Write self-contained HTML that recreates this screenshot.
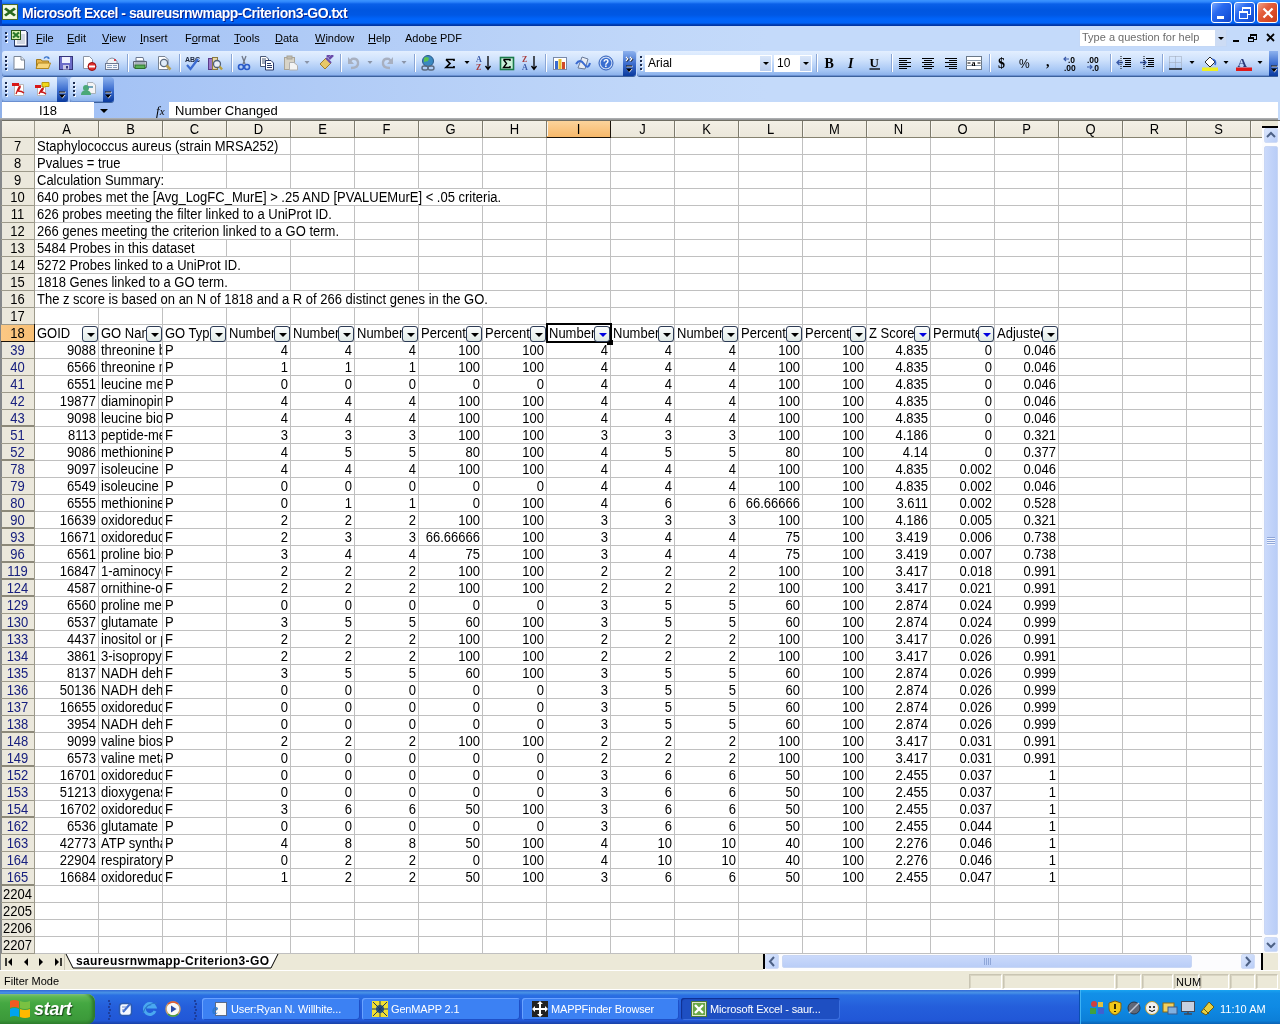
<!DOCTYPE html><html><head><meta charset="utf-8"><title>Excel</title><style>
*{box-sizing:border-box}
body{margin:0;width:1280px;height:1024px;position:relative;overflow:hidden;font-family:"Liberation Sans",sans-serif;background:#fff;color:#000}
.a{position:absolute}
.dock{background:linear-gradient(90deg,#9ebef5 0%,#b0cbf6 25%,#c0d7f9 50%,#c4dafa 60%,#c4dafa 100%)}
.tb{position:absolute;height:25px;border-radius:3px;background:linear-gradient(#e3efff 0%,#cfe2fc 35%,#a9c8f5 75%,#86aeea 100%);box-shadow:inset 0 -1px 0 #6a8fd0, 0 1px 0 #3b619c}
.grip{position:absolute;width:2px;height:2px;background:#1c2c50;box-shadow:1px 1px 0 #f4f8ff}
.sep{position:absolute;width:1px;height:18px;background:#8aa6d6;box-shadow:1px 0 0 #fff}
.chev{position:absolute;border-radius:0 3px 3px 0;background:linear-gradient(#8db2ee 0%,#3e6fd0 50%,#0a3a9e 100%)}
.mi{position:absolute;font-size:11px;top:31px;line-height:14px;color:#000}
.ch{position:absolute;top:121px;height:16px;font-size:13px;line-height:16px;text-align:center;background:linear-gradient(#f6f5ee,#e6e2d4)}
.rh{position:absolute;left:1px;width:33px;height:16px;font-size:13px;line-height:16px;text-align:center;background:linear-gradient(90deg,#f3f1e9,#e9e6da)}
.c{position:absolute;height:16px;font-size:13px;line-height:16px;white-space:nowrap;overflow:hidden;padding:0 2px;transform:scaleY(1.08);transform-origin:0 3px}
.t{transform:scaleY(1.08);transform-origin:0 3px}
.r{text-align:right}
.dd{position:absolute;z-index:1;width:16px;height:16px;border:1px solid #2c3a55;border-radius:3px;background:linear-gradient(#fbfdfd,#dfe9e6)}
.dd:after{content:"";position:absolute;left:4px;top:6px;border-left:4px solid transparent;border-right:4px solid transparent;border-top:4px solid #000}
.dd.b:after{border-top-color:#0000e0}
.tbtn{position:absolute;top:998px;height:22px;border-radius:3px;background:#3c81f3;box-shadow:inset 1px 1px 0 #6aa2ff, inset -1px -1px 0 #1e50c8;color:#fff;font-size:11px;line-height:22px;white-space:nowrap;overflow:hidden}
.sp{position:absolute;top:974px;height:15px;border:1px solid #c9c5b3;border-right-color:#fff;border-bottom-color:#fff;box-shadow:inset 1px 1px 0 #d8d4c2}
</style></head><body><div style="position:absolute;left:0;top:0;width:1280px;height:1024px;overflow:hidden;will-change:transform">
<div class="a" style="left:0;top:0;width:1280px;height:26px;background:linear-gradient(#3d95ff 0px,#2d85fb 2px,#0a60e8 4px,#0056e0 10px,#0058e4 15px,#0064fa 19px,#0062f6 23px,#0040b8 24.5px,#00309a 26px)"></div>
<div class="a" style="left:0;top:0;width:2px;height:26px;background:#0840c0"></div>
<div class="a" style="left:2px;top:4px;width:16px;height:16px"><svg width="16" height="16" viewBox="0 0 16 16" style="display:block"><rect x="0.5" y="0.5" width="15" height="15" fill="#e8f4c8" stroke="#4a6a2a"/><rect x="1.5" y="1.5" width="13" height="13" fill="#f4fae4"/><path d="M3 3.5L13 12.5M13 3.5L3 12.5" stroke="#2a6a1e" stroke-width="3" transform="translate(8 8) scale(1 0.8) translate(-8 -8)"/></svg></div>
<div class="a" style="left:22px;top:5px;font-size:14px;letter-spacing:-0.5px;font-weight:bold;line-height:16px;color:#fff;text-shadow:1px 1px 0 #0a1e8a;white-space:nowrap">Microsoft Excel - saureusrnwmapp-Criterion3-GO.txt</div>
<div class="a" style="left:1211px;top:2px;width:21px;height:21px;border:1px solid #fff;border-radius:3px;background:linear-gradient(135deg,#7aa9ff 0%,#2a6af0 35%,#1a58e0 70%,#1446c8 100%)">
<div class="a" style="left:5px;top:13px;width:7px;height:3px;background:#fff"></div>
</div>
<div class="a" style="left:1234px;top:2px;width:21px;height:21px;border:1px solid #fff;border-radius:3px;background:linear-gradient(135deg,#7aa9ff 0%,#2a6af0 35%,#1a58e0 70%,#1446c8 100%)">
<div class="a" style="left:7px;top:4px;width:9px;height:8px;border:1px solid #fff;border-top-width:2px"></div>
<div class="a" style="left:4px;top:8px;width:9px;height:8px;border:1px solid #fff;border-top-width:2px;background:#2a64e8"></div>
</div>
<div class="a" style="left:1257px;top:2px;width:21px;height:21px;border:1px solid #fff;border-radius:3px;background:linear-gradient(135deg,#f0a38a 0%,#e5603e 35%,#d84a26 70%,#c4401f 100%)">
<svg class="a" style="left:4px;top:4px" width="12" height="12"><path d="M1.5 1.5L10.5 10.5M10.5 1.5L1.5 10.5" stroke="#fff" stroke-width="2.2"/></svg>
</div>
<div class="a dock" style="left:0;top:26px;width:1280px;height:94px"></div>
<div class="a" style="left:0;top:26px;width:2px;height:94px;background:#8fb0e8"></div>
<div class="grip" style="left:5px;top:32px"></div>
<div class="grip" style="left:5px;top:36px"></div>
<div class="grip" style="left:5px;top:40px"></div>
<div class="a" style="left:10px;top:29px;width:18px;height:18px"><svg width="18" height="18" viewBox="0 0 18 18" style="display:block"><path d="M4.5 1.5H15.5L17.5 3.5V17.5H4.5Z" fill="#f8f8fc" stroke="#283c68"/><path d="M17.5 3V17.5H5" stroke="#1a2a58" stroke-width="2" fill="none"/><path d="M11 6H15M11 8H15M11 10H15M7 12H15M7 14H15" stroke="#a8b4c8"/><rect x="1.5" y="1.5" width="9" height="9" fill="#d8f0b0" stroke="#2a5a1a"/><path d="M3 3.5L9 8.5M9 3.5L3 8.5" stroke="#2a7a2a" stroke-width="2.2"/></svg></div>
<div class="mi" style="left:36px"><u>F</u>ile</div>
<div class="mi" style="left:67px"><u>E</u>dit</div>
<div class="mi" style="left:102px"><u>V</u>iew</div>
<div class="mi" style="left:140px"><u>I</u>nsert</div>
<div class="mi" style="left:185px">F<u>o</u>rmat</div>
<div class="mi" style="left:234px"><u>T</u>ools</div>
<div class="mi" style="left:275px"><u>D</u>ata</div>
<div class="mi" style="left:315px"><u>W</u>indow</div>
<div class="mi" style="left:368px"><u>H</u>elp</div>
<div class="mi" style="left:405px">Adob<u>e</u> PDF</div>
<div class="a" style="left:1079px;top:29px;width:148px;height:18px;background:#fff;border:1px solid #c4d8f6"></div>
<div class="a" style="left:1215px;top:30px;width:11px;height:16px;background:#cddcf4"></div>
<div class="a" style="left:1218px;top:37px;border-left:3px solid transparent;border-right:3px solid transparent;border-top:3px solid #000;width:0;height:0"></div>
<div class="a" style="left:1082px;top:29px;font-size:11px;line-height:16px;color:#6d6d6d">Type a question for help</div>
<div class="a" style="left:1233px;top:40px;width:6px;height:2px;background:#000"></div>
<div class="a" style="left:1250px;top:34px;width:7px;height:6px;border:1px solid #000;border-top-width:2px"></div>
<div class="a" style="left:1248px;top:37px;width:6px;height:5px;border:1px solid #000;border-top-width:2px;background:#c4daf9"></div>
<svg class="a" style="left:1266px;top:33px" width="9" height="9"><path d="M1 1L8 8M8 1L1 8" stroke="#000" stroke-width="1.8"/></svg>
<div class="tb" style="left:2px;top:51px;width:634px"></div>
<div class="grip" style="left:5px;top:56px"></div>
<div class="grip" style="left:5px;top:60px"></div>
<div class="grip" style="left:5px;top:64px"></div>
<div class="grip" style="left:5px;top:68px"></div>
<div class="sep" style="left:127px;top:54px"></div>
<div class="sep" style="left:179px;top:54px"></div>
<div class="sep" style="left:231px;top:54px"></div>
<div class="sep" style="left:340px;top:54px"></div>
<div class="sep" style="left:414px;top:54px"></div>
<div class="sep" style="left:545px;top:54px"></div>
<div class="a" style="left:11px;top:55px;width:16px;height:16px"><svg width="16" height="16" viewBox="0 0 16 16" style="display:block"><path d="M3 1.5H10L13.5 5V14.5H3Z" fill="#fff" stroke="#7a8595"/><path d="M10 1.5V5H13.5" fill="#e6ebf3" stroke="#7a8595"/><path d="M4 13.5H13" stroke="#c6cdd8"/></svg></div>
<div class="a" style="left:35px;top:55px;width:16px;height:16px"><svg width="16" height="16" viewBox="0 0 16 16" style="display:block"><path d="M1.5 4.5H6L7 6H13.5V13.5H1.5Z" fill="#e8b448" stroke="#a07a1c"/><path d="M3 8H15.5L13.5 13.5H1Z" fill="#f7d57a" stroke="#b08620"/><path d="M9 3.5Q11 0.5 14 3" stroke="#3a74c8" stroke-width="1.3" fill="none"/><path d="M13 1.5L15 3.5L12.5 4Z" fill="#3a74c8"/></svg></div>
<div class="a" style="left:58px;top:55px;width:16px;height:16px"><svg width="16" height="16" viewBox="0 0 16 16" style="display:block"><rect x="1.5" y="1.5" width="13" height="13" fill="#6c6cc8" stroke="#34347a"/><rect x="4" y="2" width="8" height="6" fill="#eef0ff"/><rect x="5" y="10" width="6" height="4.5" fill="#c9c9e8"/><rect x="8" y="11" width="2" height="2.5" fill="#34347a"/></svg></div>
<div class="a" style="left:81px;top:55px;width:16px;height:16px"><svg width="16" height="16" viewBox="0 0 16 16" style="display:block"><path d="M2.5 1.5H8.5L11.5 4.5V13.5H2.5Z" fill="#fff" stroke="#8a94a4"/><circle cx="11" cy="11.5" r="4" fill="#e03030" stroke="#9a1010"/><rect x="8" y="10.5" width="6" height="2" fill="#fff"/></svg></div>
<div class="a" style="left:104px;top:55px;width:16px;height:16px"><svg width="16" height="16" viewBox="0 0 16 16" style="display:block"><path d="M3 6Q8 0 13 6V10H3Z" fill="#f0f2f6" stroke="#8a94a4"/><rect x="1.5" y="8.5" width="13" height="6" fill="#f4f6fa" stroke="#6c7890"/><path d="M3 10.5H8M3 12.5H8M9 10.5H13M9 12.5H13" stroke="#8aa0c0"/><rect x="10" y="4" width="2" height="2" fill="#d04050"/></svg></div>
<div class="a" style="left:132px;top:55px;width:16px;height:16px"><svg width="16" height="16" viewBox="0 0 16 16" style="display:block"><path d="M4 2.5H11L12 6H4Z" fill="#fff" stroke="#6c7890"/><path d="M1.5 6.5H14.5V12.5H1.5Z" fill="#c6ccd6" stroke="#5c6678"/><rect x="3" y="10" width="10" height="3.5" fill="#58b058" stroke="#2c6e2c"/><path d="M3 8H13" stroke="#8c96a8"/></svg></div>
<div class="a" style="left:156px;top:55px;width:16px;height:16px"><svg width="16" height="16" viewBox="0 0 16 16" style="display:block"><path d="M2.5 1.5H9L12 4.5V14.5H2.5Z" fill="#fff" stroke="#7a8595"/><circle cx="8" cy="8" r="3.6" fill="#e0ecf8" stroke="#5a6a80" stroke-width="1.3"/><path d="M10.5 10.5L14.5 14.5" stroke="#b8a050" stroke-width="2.5"/></svg></div>
<div class="a" style="left:184px;top:55px;width:16px;height:16px"><svg width="16" height="16" viewBox="0 0 16 16" style="display:block"><text x="1" y="7" font-family="Liberation Sans" font-size="7" font-weight="bold" fill="#202a40">ABC</text><path d="M3 10L6.5 14L14 4" stroke="#3a6ad0" stroke-width="2.2" fill="none"/></svg></div>
<div class="a" style="left:207px;top:55px;width:16px;height:16px"><svg width="16" height="16" viewBox="0 0 16 16" style="display:block"><rect x="1.5" y="3.5" width="4" height="11" fill="#9a7ac8" stroke="#5a3a8a"/><rect x="5.5" y="2.5" width="5" height="12" fill="#e8d8a8" stroke="#8a7a40"/><circle cx="10" cy="9" r="3.5" fill="#e8eef8" stroke="#50607a" stroke-width="1.3"/><path d="M12.5 11.5L15 14.5" stroke="#b8a040" stroke-width="2.4"/></svg></div>
<div class="a" style="left:236px;top:55px;width:16px;height:16px"><svg width="16" height="16" viewBox="0 0 16 16" style="display:block"><path d="M6 1L9 9M10 1L7 9" stroke="#707888" stroke-width="1.3"/><circle cx="5" cy="12" r="2.5" fill="none" stroke="#2a5ac8" stroke-width="1.6"/><circle cx="11" cy="12" r="2.5" fill="none" stroke="#2a5ac8" stroke-width="1.6"/></svg></div>
<div class="a" style="left:259px;top:55px;width:16px;height:16px"><svg width="16" height="16" viewBox="0 0 16 16" style="display:block"><path d="M1.5 1.5H7L9.5 4V11.5H1.5Z" fill="#fff" stroke="#4a5a78"/><path d="M3 4H7M3 6H8M3 8H8" stroke="#4a5a78"/><path d="M6.5 5.5H12L14.5 8V15H6.5Z" fill="#fff" stroke="#2a3a68"/><path d="M8 8.5H12M8 10.5H13M8 12.5H13" stroke="#2a3a68"/></svg></div>
<div class="a" style="left:283px;top:55px;width:16px;height:16px"><svg width="16" height="16" viewBox="0 0 16 16" style="display:block"><rect x="1.5" y="2.5" width="10" height="12" fill="#d8d4c8" stroke="#a8a498"/><rect x="4" y="1" width="5" height="3" fill="#c0bcb0" stroke="#a8a498"/><path d="M6.5 7.5H11L14.5 10.5V15H6.5Z" fill="#f4f4f4" stroke="#b0b0b0"/></svg></div>
<div class="a" style="left:304px;top:55px;width:16px;height:16px"><svg width="6" height="16" viewBox="0 0 6 16" style="display:block"><path d="M0.5 6H5.5L3 9Z" fill="#8a94a8"/></svg></div>
<div class="a" style="left:318px;top:55px;width:16px;height:16px"><svg width="16" height="16" viewBox="0 0 16 16" style="display:block"><path d="M2 9L8 3L13 8L7 14Z" fill="#e8c868" stroke="#a08030"/><path d="M9 2L13 -2M11 4L15 0" stroke="#6a4aa8" stroke-width="2.5"/><path d="M8 3L13 8" stroke="#6a4aa8" stroke-width="2"/></svg></div>
<div class="a" style="left:346px;top:55px;width:16px;height:16px"><svg width="16" height="16" viewBox="0 0 16 16" style="display:block"><path d="M5 13Q13 13 12 7Q11 3 6 4L4 6" stroke="#a8b0c0" stroke-width="2.4" fill="none"/><path d="M2 2V9H8Z" fill="#a8b0c0"/></svg></div>
<div class="a" style="left:367px;top:55px;width:16px;height:16px"><svg width="6" height="16" viewBox="0 0 6 16" style="display:block"><path d="M0.5 6H5.5L3 9Z" fill="#8a94a8"/></svg></div>
<div class="a" style="left:379px;top:55px;width:16px;height:16px"><svg width="16" height="16" viewBox="0 0 16 16" style="display:block"><path d="M11 13Q3 13 4 7Q5 3 10 4L12 6" stroke="#a8b0c0" stroke-width="2.4" fill="none"/><path d="M14 2V9H8Z" fill="#a8b0c0"/></svg></div>
<div class="a" style="left:401px;top:55px;width:16px;height:16px"><svg width="6" height="16" viewBox="0 0 6 16" style="display:block"><path d="M0.5 6H5.5L3 9Z" fill="#8a94a8"/></svg></div>
<div class="a" style="left:420px;top:55px;width:16px;height:16px"><svg width="16" height="16" viewBox="0 0 16 16" style="display:block"><circle cx="8" cy="6" r="5.5" fill="#3a88c0" stroke="#2a5a8a"/><path d="M4 3Q6 1 9 3L8 6L4 7Z" fill="#5ac050"/><rect x="2" y="11" width="6" height="4" rx="2" fill="none" stroke="#5a6a80" stroke-width="1.4"/><rect x="8" y="11" width="6" height="4" rx="2" fill="none" stroke="#5a6a80" stroke-width="1.4"/></svg></div>
<div class="a" style="left:442px;top:55px;width:16px;height:16px"><svg width="16" height="16" viewBox="0 0 16 16" style="display:block"><path d="M4 4.5H12V6M12 11V12.5H4L8 8.5L4 4.5" fill="none" stroke="#000" stroke-width="1.7"/></svg></div>
<div class="a" style="left:464px;top:55px;width:16px;height:16px"><svg width="6" height="16" viewBox="0 0 6 16" style="display:block"><path d="M0.5 6H5.5L3 9Z" fill="#000"/></svg></div>
<div class="a" style="left:476px;top:55px;width:16px;height:16px"><svg width="16" height="16" viewBox="0 0 16 16" style="display:block"><text x="0" y="7" font-family="Liberation Serif" font-size="8" font-weight="bold" fill="#3a5aa8">A</text><text x="0" y="15" font-family="Liberation Serif" font-size="8" font-weight="bold" fill="#a83a3a">Z</text><path d="M12 1V14M9.5 11L12 14.5L14.5 11" stroke="#000" stroke-width="1.3" fill="none"/></svg></div>
<div class="a" style="left:499px;top:55px;width:16px;height:16px"><svg width="16" height="16" viewBox="0 0 16 16" style="display:block"><rect x="1.5" y="2.5" width="13" height="12" fill="#c8f0d8" stroke="#1a7a4a" stroke-width="1.6"/><path d="M4.5 4.5H11V6M11 11V12.5H4.5L7.5 8.5L4.5 4.5" fill="none" stroke="#000" stroke-width="1.4"/></svg></div>
<div class="a" style="left:522px;top:55px;width:16px;height:16px"><svg width="16" height="16" viewBox="0 0 16 16" style="display:block"><text x="0" y="7" font-family="Liberation Serif" font-size="8" font-weight="bold" fill="#a83a3a">Z</text><text x="0" y="15" font-family="Liberation Serif" font-size="8" font-weight="bold" fill="#3a5aa8">A</text><path d="M12 1V14M9.5 11L12 14.5L14.5 11" stroke="#000" stroke-width="1.3" fill="none"/></svg></div>
<div class="a" style="left:552px;top:55px;width:16px;height:16px"><svg width="16" height="16" viewBox="0 0 16 16" style="display:block"><rect x="1.5" y="2.5" width="13" height="12" fill="#fff" stroke="#7a8aa8"/><rect x="3" y="6" width="3" height="8" fill="#3a6ad0"/><rect x="6.5" y="4" width="3" height="10" fill="#e8c030"/><rect x="10" y="7" width="3" height="7" fill="#d04a2a"/></svg></div>
<div class="a" style="left:575px;top:55px;width:16px;height:16px"><svg width="16" height="16" viewBox="0 0 16 16" style="display:block"><path d="M3 13L7 2L13 4L10 14Z" fill="#e8ecf4" stroke="#6a7a98"/><path d="M1 9Q5 3 9 9T15 8" stroke="#3a6ad0" stroke-width="2" fill="none"/></svg></div>
<div class="a" style="left:598px;top:55px;width:16px;height:16px"><svg width="16" height="16" viewBox="0 0 16 16" style="display:block"><circle cx="8" cy="8" r="7" fill="#c8d8f4" stroke="#2a5ab8"/><circle cx="8" cy="8" r="5.3" fill="#3a6ed0"/><text x="4.9" y="12" font-family="Liberation Sans" font-size="10" font-weight="bold" fill="#fff">?</text></svg></div>
<div class="chev" style="left:623px;top:51px;width:13px;height:25px"></div>
<svg class="a" style="left:625px;top:56px" width="9" height="18"><path d="M1.5 1.5L3.5 3.5L1.5 5.5M5.5 1.5L7.5 3.5L5.5 5.5" stroke="#000" fill="none" stroke-width="1.3"/><path d="M1 1L3 3L1 5M5 1L7 3L5 5" stroke="#fff" fill="none" stroke-width="1.1"/><path d="M1.5 10.5H7.5" stroke="#fff" stroke-width="1.5"/><path d="M1 10H7" stroke="#000" stroke-width="1"/><path d="M1.5 13H7.5L4.5 16.5Z" fill="#fff"/><path d="M1 12.5H7L4 16Z" fill="#000"/></svg>
<div class="tb" style="left:637px;top:51px;width:643px"></div>
<div class="grip" style="left:640px;top:56px"></div>
<div class="grip" style="left:640px;top:60px"></div>
<div class="grip" style="left:640px;top:64px"></div>
<div class="grip" style="left:640px;top:68px"></div>
<div class="a" style="left:645px;top:55px;width:127px;height:17px;background:#fff"></div>
<div class="a" style="left:760px;top:56px;width:11px;height:15px;background:linear-gradient(#d9e6f9,#b9cdee)"></div>
<div class="a" style="left:763px;top:62px;border-left:3px solid transparent;border-right:3px solid transparent;border-top:3px solid #000"></div>
<div class="a" style="left:648px;top:56px;font-size:12px;line-height:15px">Arial</div>
<div class="a" style="left:774px;top:55px;width:38px;height:17px;background:#fff"></div>
<div class="a" style="left:800px;top:56px;width:11px;height:15px;background:linear-gradient(#d9e6f9,#b9cdee)"></div>
<div class="a" style="left:803px;top:62px;border-left:3px solid transparent;border-right:3px solid transparent;border-top:3px solid #000"></div>
<div class="a" style="left:777px;top:56px;font-size:12px;line-height:15px">10</div>
<div class="sep" style="left:816px;top:54px"></div>
<div class="sep" style="left:891px;top:54px"></div>
<div class="sep" style="left:989px;top:54px"></div>
<div class="sep" style="left:1110px;top:54px"></div>
<div class="sep" style="left:1162px;top:54px"></div>
<div class="a" style="left:822px;top:55px;width:16px;height:16px"><svg width="16" height="16" viewBox="0 0 16 16" style="display:block"><text x="2.5" y="13" font-family="Liberation Serif" font-size="14" font-weight="bold" fill="#000">B</text></svg></div>
<div class="a" style="left:844px;top:55px;width:16px;height:16px"><svg width="16" height="16" viewBox="0 0 16 16" style="display:block"><text x="4" y="13" font-family="Liberation Serif" font-size="14" font-style="italic" font-weight="bold" fill="#000">I</text></svg></div>
<div class="a" style="left:867px;top:55px;width:16px;height:16px"><svg width="16" height="16" viewBox="0 0 16 16" style="display:block"><text x="2.5" y="12" font-family="Liberation Serif" font-size="13" font-weight="bold" fill="#000">U</text><path d="M2.5 14H13" stroke="#000" stroke-width="1.3"/></svg></div>
<div class="a" style="left:897px;top:55px;width:16px;height:16px"><svg width="16" height="16" viewBox="0 0 16 16" style="display:block"><path d="M2 3.5H14" stroke="#000" stroke-width="1"/><path d="M2 5.5H10" stroke="#000" stroke-width="1"/><path d="M2 7.5H14" stroke="#000" stroke-width="1"/><path d="M2 9.5H10" stroke="#000" stroke-width="1"/><path d="M2 11.5H14" stroke="#000" stroke-width="1"/><path d="M2 13.5H10" stroke="#000" stroke-width="1"/></svg></div>
<div class="a" style="left:920px;top:55px;width:16px;height:16px"><svg width="16" height="16" viewBox="0 0 16 16" style="display:block"><path d="M2 3.5H14" stroke="#000" stroke-width="1"/><path d="M4 5.5H12" stroke="#000" stroke-width="1"/><path d="M2 7.5H14" stroke="#000" stroke-width="1"/><path d="M4 9.5H12" stroke="#000" stroke-width="1"/><path d="M2 11.5H14" stroke="#000" stroke-width="1"/><path d="M4 13.5H12" stroke="#000" stroke-width="1"/></svg></div>
<div class="a" style="left:943px;top:55px;width:16px;height:16px"><svg width="16" height="16" viewBox="0 0 16 16" style="display:block"><path d="M2 3.5H14" stroke="#000" stroke-width="1"/><path d="M6 5.5H14" stroke="#000" stroke-width="1"/><path d="M2 7.5H14" stroke="#000" stroke-width="1"/><path d="M6 9.5H14" stroke="#000" stroke-width="1"/><path d="M2 11.5H14" stroke="#000" stroke-width="1"/><path d="M6 13.5H14" stroke="#000" stroke-width="1"/></svg></div>
<div class="a" style="left:966px;top:55px;width:16px;height:16px"><svg width="16" height="16" viewBox="0 0 16 16" style="display:block"><rect x="0.5" y="1.5" width="15" height="13" fill="#fff" stroke="#6a7888"/><path d="M0.5 5.5H15.5M0.5 10.5H15.5" stroke="#8a98a8"/><text x="5.5" y="10.5" font-family="Liberation Serif" font-size="8" font-weight="bold">a</text><path d="M1.5 8H4.5M11.5 8H14.5" stroke="#000"/></svg></div>
<div class="a" style="left:995px;top:55px;width:16px;height:16px"><svg width="16" height="16" viewBox="0 0 16 16" style="display:block"><text x="3" y="13" font-family="Liberation Serif" font-size="14" font-weight="bold" fill="#000">$</text></svg></div>
<div class="a" style="left:1018px;top:55px;width:16px;height:16px"><svg width="16" height="16" viewBox="0 0 16 16" style="display:block"><text x="1" y="13" font-family="Liberation Sans" font-size="12" fill="#000">%</text></svg></div>
<div class="a" style="left:1041px;top:55px;width:16px;height:16px"><svg width="16" height="16" viewBox="0 0 16 16" style="display:block"><text x="5" y="11" font-family="Liberation Serif" font-size="14" font-weight="bold" fill="#000">,</text></svg></div>
<div class="a" style="left:1063px;top:55px;width:16px;height:16px"><svg width="16" height="16" viewBox="0 0 16 16" style="display:block"><text x="5" y="7.5" font-family="Liberation Sans" font-size="8.5" font-weight="bold">.0</text><text x="1" y="15.5" font-family="Liberation Sans" font-size="8.5" font-weight="bold">.00</text><path d="M1 4H6M3 2L1 4L3 6" stroke="#3a5aa8" fill="none" stroke-width="1.2"/></svg></div>
<div class="a" style="left:1086px;top:55px;width:16px;height:16px"><svg width="16" height="16" viewBox="0 0 16 16" style="display:block"><text x="1" y="7.5" font-family="Liberation Sans" font-size="8.5" font-weight="bold">.00</text><text x="6" y="15.5" font-family="Liberation Sans" font-size="8.5" font-weight="bold">.0</text><path d="M1 12H6M4 10L6 12L4 14" stroke="#3a5aa8" fill="none" stroke-width="1.2"/></svg></div>
<div class="a" style="left:1116px;top:55px;width:16px;height:16px"><svg width="16" height="16" viewBox="0 0 16 16" style="display:block"><path d="M7 3.5H15M9 5.5H15M9 7.5H15M9 9.5H15M7 11.5H15" stroke="#000"/><path d="M1 7.5H7M3.5 5L1 7.5L3.5 10" stroke="#3a5aa8" fill="none" stroke-width="1.4"/><path d="M5 1V15" stroke="#000" stroke-dasharray="1 1"/></svg></div>
<div class="a" style="left:1139px;top:55px;width:16px;height:16px"><svg width="16" height="16" viewBox="0 0 16 16" style="display:block"><path d="M7 3.5H15M9 5.5H15M9 7.5H15M9 9.5H15M7 11.5H15" stroke="#000"/><path d="M1 7.5H7M4.5 5L7 7.5L4.5 10" stroke="#3a5aa8" fill="none" stroke-width="1.4"/><path d="M5 1V15" stroke="#000" stroke-dasharray="1 1"/></svg></div>
<div class="a" style="left:1168px;top:55px;width:16px;height:16px"><svg width="16" height="16" viewBox="0 0 16 16" style="display:block"><rect x="1.5" y="1.5" width="12" height="12" fill="none" stroke="#9aa4b4" stroke-dasharray="1 1"/><path d="M7.5 1.5V13.5M1.5 7.5H13.5" stroke="#9aa4b4" stroke-dasharray="1 1"/><path d="M1 14H14" stroke="#000" stroke-width="1.3"/></svg></div>
<div class="a" style="left:1189px;top:55px;width:16px;height:16px"><svg width="6" height="16" viewBox="0 0 6 16" style="display:block"><path d="M0.5 6H5.5L3 9Z" fill="#000"/></svg></div>
<div class="a" style="left:1202px;top:55px;width:16px;height:16px"><svg width="16" height="16" viewBox="0 0 16 16" style="display:block"><path d="M3 7L8 2L13 7L8 12Z" fill="#fff" stroke="#2a2a2a"/><path d="M10 4Q15 5 13 10" stroke="#3a6ad0" stroke-width="1.6" fill="none"/><rect x="0" y="12.5" width="16" height="3.5" fill="#f0f020"/></svg></div>
<div class="a" style="left:1223px;top:55px;width:16px;height:16px"><svg width="6" height="16" viewBox="0 0 6 16" style="display:block"><path d="M0.5 6H5.5L3 9Z" fill="#000"/></svg></div>
<div class="a" style="left:1236px;top:55px;width:16px;height:16px"><svg width="16" height="16" viewBox="0 0 16 16" style="display:block"><text x="1.5" y="11.5" font-family="Liberation Serif" font-size="13" font-weight="bold" fill="#2a3a78">A</text><rect x="0" y="12.5" width="16" height="3.5" fill="#e01818"/></svg></div>
<div class="a" style="left:1257px;top:55px;width:16px;height:16px"><svg width="6" height="16" viewBox="0 0 6 16" style="display:block"><path d="M0.5 6H5.5L3 9Z" fill="#000"/></svg></div>
<div class="chev" style="left:1269px;top:51px;width:11px;height:25px;border-radius:0"></div>
<svg class="a" style="left:1270px;top:65px" width="9" height="10"><path d="M1.5 1.5H7.5" stroke="#fff" stroke-width="1.5"/><path d="M1 1H7" stroke="#000" stroke-width="1"/><path d="M1.5 4H7.5L4.5 7.5Z" fill="#fff"/><path d="M1 3.5H7L4 7Z" fill="#000"/></svg>
<div class="tb" style="left:2px;top:77px;width:66px"></div>
<div class="grip" style="left:5px;top:82px"></div>
<div class="grip" style="left:5px;top:86px"></div>
<div class="grip" style="left:5px;top:90px"></div>
<div class="grip" style="left:5px;top:94px"></div>
<div class="a" style="left:11px;top:81px;width:16px;height:16px"><svg width="16" height="16" viewBox="0 0 16 16" style="display:block"><path d="M3.5 3.5H12.5V14.5H3.5Z" fill="#fff" stroke="#b8b8b8"/><rect x="1" y="2" width="7" height="3" fill="#d81818"/><path d="M5 13Q8 5 9 5Q10 6 7 10Q11 10 13 12" stroke="#c81818" stroke-width="1.3" fill="none"/></svg></div>
<div class="a" style="left:34px;top:81px;width:16px;height:16px"><svg width="16" height="16" viewBox="0 0 16 16" style="display:block"><path d="M3.5 5.5H11.5V14.5H3.5Z" fill="#fff" stroke="#b8b8b8"/><rect x="1" y="4" width="6" height="3" fill="#d81818"/><path d="M5 13Q8 7 9 7Q10 8 7 11Q10 11 12 13" stroke="#c81818" stroke-width="1.3" fill="none"/><path d="M8 1.5H15V5.5H11L9.5 7V5.5H8Z" fill="#f0d818" stroke="#b89a10"/></svg></div>
<div class="chev" style="left:57px;top:77px;width:11px;height:25px"></div>
<svg class="a" style="left:58px;top:91px" width="9" height="10"><path d="M1.5 1.5H7.5" stroke="#fff" stroke-width="1.5"/><path d="M1 1H7" stroke="#000" stroke-width="1"/><path d="M1.5 4H7.5L4.5 7.5Z" fill="#fff"/><path d="M1 3.5H7L4 7Z" fill="#000"/></svg>
<div class="tb" style="left:70px;top:77px;width:44px"></div>
<div class="grip" style="left:73px;top:82px"></div>
<div class="grip" style="left:73px;top:86px"></div>
<div class="grip" style="left:73px;top:90px"></div>
<div class="grip" style="left:73px;top:94px"></div>
<div class="a" style="left:80px;top:81px;width:16px;height:16px"><svg width="16" height="16" viewBox="0 0 16 16" style="display:block"><path d="M7.5 1.5H13L15.5 4V12.5H7.5Z" fill="#f4f4f4" stroke="#a8b0b8"/><circle cx="6" cy="7" r="3" fill="#4aa878"/><path d="M1 14Q1 9 6 9.5Q11 9 11 14Z" fill="#4aa878"/><path d="M8 6H13" stroke="#4a8aa8" stroke-width="1.5"/></svg></div>
<div class="chev" style="left:103px;top:77px;width:11px;height:25px"></div>
<svg class="a" style="left:104px;top:91px" width="9" height="10"><path d="M1.5 1.5H7.5" stroke="#fff" stroke-width="1.5"/><path d="M1 1H7" stroke="#000" stroke-width="1"/><path d="M1.5 4H7.5L4.5 7.5Z" fill="#fff"/><path d="M1 3.5H7L4 7Z" fill="#000"/></svg>
<div class="a" style="left:2px;top:102px;width:92px;height:16px;background:#fff"></div>
<div class="a" style="left:2px;top:102px;width:92px;height:17px;font-size:13px;line-height:17px;text-align:center">I18</div>
<div class="a" style="left:100px;top:109px;border-left:4px solid transparent;border-right:4px solid transparent;border-top:4px solid #000"></div>
<div class="a" style="left:156px;top:102px;font-size:13px;font-style:italic;font-family:'Liberation Serif',serif;line-height:17px">f<span style="font-size:11px">x</span></div>
<div class="a" style="left:169px;top:102px;width:1111px;height:16px;background:#fff"></div>
<div class="a" style="left:175px;top:102px;font-size:13px;line-height:17px">Number Changed</div>
<div class="a" style="left:0;top:118px;width:1280px;height:2px;background:linear-gradient(#b4b6b8,#8e9092)"></div>
<div class="a" style="left:0;top:120px;width:1262px;height:834px;background:#fff"></div>
<div class="a" style="left:0;top:120px;width:1262px;height:1px;background:#6f6d62"></div>
<div class="a" style="left:0;top:121px;width:1262px;height:16px;background:linear-gradient(#f3f0e6,#ebe7da)"></div>
<div class="a" style="left:0;top:137px;width:1262px;height:1px;background:#86826f"></div>
<div class="a" style="left:0;top:138px;width:34px;height:816px;background:#ebe8dc"></div>
<div class="a" style="left:0;top:120px;width:2px;height:850px;background:#85888a"></div>
<div class="a" style="left:34px;top:121px;width:1px;height:833px;background:#9d9a8b"></div>
<div class="a" style="left:547px;top:121px;width:63px;height:16px;background:linear-gradient(#fbd39b,#f7b86a)"></div>
<div class="a" style="left:546px;top:137px;width:65px;height:1px;background:#1a1208"></div>
<div class="a" style="left:546px;top:121px;width:1px;height:17px;background:#6b5a3a"></div>
<div class="a" style="left:610px;top:121px;width:1px;height:17px;background:#1a1208"></div>
<div class="a" style="left:98px;top:121px;width:1px;height:16px;background:#7d7a6c"></div>
<div class="a" style="left:99px;top:122px;width:1px;height:14px;background:#f8f6f0"></div>
<div class="a t" style="left:35px;top:121px;width:63px;height:16px;font-size:13px;line-height:16px;text-align:center">A</div>
<div class="a" style="left:162px;top:121px;width:1px;height:16px;background:#7d7a6c"></div>
<div class="a" style="left:163px;top:122px;width:1px;height:14px;background:#f8f6f0"></div>
<div class="a t" style="left:99px;top:121px;width:63px;height:16px;font-size:13px;line-height:16px;text-align:center">B</div>
<div class="a" style="left:226px;top:121px;width:1px;height:16px;background:#7d7a6c"></div>
<div class="a" style="left:227px;top:122px;width:1px;height:14px;background:#f8f6f0"></div>
<div class="a t" style="left:163px;top:121px;width:63px;height:16px;font-size:13px;line-height:16px;text-align:center">C</div>
<div class="a" style="left:290px;top:121px;width:1px;height:16px;background:#7d7a6c"></div>
<div class="a" style="left:291px;top:122px;width:1px;height:14px;background:#f8f6f0"></div>
<div class="a t" style="left:227px;top:121px;width:63px;height:16px;font-size:13px;line-height:16px;text-align:center">D</div>
<div class="a" style="left:354px;top:121px;width:1px;height:16px;background:#7d7a6c"></div>
<div class="a" style="left:355px;top:122px;width:1px;height:14px;background:#f8f6f0"></div>
<div class="a t" style="left:291px;top:121px;width:63px;height:16px;font-size:13px;line-height:16px;text-align:center">E</div>
<div class="a" style="left:418px;top:121px;width:1px;height:16px;background:#7d7a6c"></div>
<div class="a" style="left:419px;top:122px;width:1px;height:14px;background:#f8f6f0"></div>
<div class="a t" style="left:355px;top:121px;width:63px;height:16px;font-size:13px;line-height:16px;text-align:center">F</div>
<div class="a" style="left:482px;top:121px;width:1px;height:16px;background:#7d7a6c"></div>
<div class="a" style="left:483px;top:122px;width:1px;height:14px;background:#f8f6f0"></div>
<div class="a t" style="left:419px;top:121px;width:63px;height:16px;font-size:13px;line-height:16px;text-align:center">G</div>
<div class="a" style="left:546px;top:121px;width:1px;height:16px;background:#7d7a6c"></div>
<div class="a" style="left:547px;top:122px;width:1px;height:14px;background:#f8f6f0"></div>
<div class="a t" style="left:483px;top:121px;width:63px;height:16px;font-size:13px;line-height:16px;text-align:center">H</div>
<div class="a t" style="left:547px;top:121px;width:63px;height:16px;font-size:13px;line-height:16px;text-align:center">I</div>
<div class="a" style="left:674px;top:121px;width:1px;height:16px;background:#7d7a6c"></div>
<div class="a" style="left:675px;top:122px;width:1px;height:14px;background:#f8f6f0"></div>
<div class="a t" style="left:611px;top:121px;width:63px;height:16px;font-size:13px;line-height:16px;text-align:center">J</div>
<div class="a" style="left:738px;top:121px;width:1px;height:16px;background:#7d7a6c"></div>
<div class="a" style="left:739px;top:122px;width:1px;height:14px;background:#f8f6f0"></div>
<div class="a t" style="left:675px;top:121px;width:63px;height:16px;font-size:13px;line-height:16px;text-align:center">K</div>
<div class="a" style="left:802px;top:121px;width:1px;height:16px;background:#7d7a6c"></div>
<div class="a" style="left:803px;top:122px;width:1px;height:14px;background:#f8f6f0"></div>
<div class="a t" style="left:739px;top:121px;width:63px;height:16px;font-size:13px;line-height:16px;text-align:center">L</div>
<div class="a" style="left:866px;top:121px;width:1px;height:16px;background:#7d7a6c"></div>
<div class="a" style="left:867px;top:122px;width:1px;height:14px;background:#f8f6f0"></div>
<div class="a t" style="left:803px;top:121px;width:63px;height:16px;font-size:13px;line-height:16px;text-align:center">M</div>
<div class="a" style="left:930px;top:121px;width:1px;height:16px;background:#7d7a6c"></div>
<div class="a" style="left:931px;top:122px;width:1px;height:14px;background:#f8f6f0"></div>
<div class="a t" style="left:867px;top:121px;width:63px;height:16px;font-size:13px;line-height:16px;text-align:center">N</div>
<div class="a" style="left:994px;top:121px;width:1px;height:16px;background:#7d7a6c"></div>
<div class="a" style="left:995px;top:122px;width:1px;height:14px;background:#f8f6f0"></div>
<div class="a t" style="left:931px;top:121px;width:63px;height:16px;font-size:13px;line-height:16px;text-align:center">O</div>
<div class="a" style="left:1058px;top:121px;width:1px;height:16px;background:#7d7a6c"></div>
<div class="a" style="left:1059px;top:122px;width:1px;height:14px;background:#f8f6f0"></div>
<div class="a t" style="left:995px;top:121px;width:63px;height:16px;font-size:13px;line-height:16px;text-align:center">P</div>
<div class="a" style="left:1122px;top:121px;width:1px;height:16px;background:#7d7a6c"></div>
<div class="a" style="left:1123px;top:122px;width:1px;height:14px;background:#f8f6f0"></div>
<div class="a t" style="left:1059px;top:121px;width:63px;height:16px;font-size:13px;line-height:16px;text-align:center">Q</div>
<div class="a" style="left:1186px;top:121px;width:1px;height:16px;background:#7d7a6c"></div>
<div class="a" style="left:1187px;top:122px;width:1px;height:14px;background:#f8f6f0"></div>
<div class="a t" style="left:1123px;top:121px;width:63px;height:16px;font-size:13px;line-height:16px;text-align:center">R</div>
<div class="a" style="left:1250px;top:121px;width:1px;height:16px;background:#7d7a6c"></div>
<div class="a" style="left:1251px;top:122px;width:1px;height:14px;background:#f8f6f0"></div>
<div class="a t" style="left:1187px;top:121px;width:63px;height:16px;font-size:13px;line-height:16px;text-align:center">S</div>
<div class="a" style="left:98px;top:138px;width:1px;height:816px;background:#c0c0c0"></div>
<div class="a" style="left:162px;top:138px;width:1px;height:816px;background:#c0c0c0"></div>
<div class="a" style="left:226px;top:138px;width:1px;height:816px;background:#c0c0c0"></div>
<div class="a" style="left:290px;top:138px;width:1px;height:816px;background:#c0c0c0"></div>
<div class="a" style="left:354px;top:138px;width:1px;height:816px;background:#c0c0c0"></div>
<div class="a" style="left:418px;top:138px;width:1px;height:816px;background:#c0c0c0"></div>
<div class="a" style="left:482px;top:138px;width:1px;height:816px;background:#c0c0c0"></div>
<div class="a" style="left:546px;top:138px;width:1px;height:816px;background:#c0c0c0"></div>
<div class="a" style="left:610px;top:138px;width:1px;height:816px;background:#c0c0c0"></div>
<div class="a" style="left:674px;top:138px;width:1px;height:816px;background:#c0c0c0"></div>
<div class="a" style="left:738px;top:138px;width:1px;height:816px;background:#c0c0c0"></div>
<div class="a" style="left:802px;top:138px;width:1px;height:816px;background:#c0c0c0"></div>
<div class="a" style="left:866px;top:138px;width:1px;height:816px;background:#c0c0c0"></div>
<div class="a" style="left:930px;top:138px;width:1px;height:816px;background:#c0c0c0"></div>
<div class="a" style="left:994px;top:138px;width:1px;height:816px;background:#c0c0c0"></div>
<div class="a" style="left:1058px;top:138px;width:1px;height:816px;background:#c0c0c0"></div>
<div class="a" style="left:1122px;top:138px;width:1px;height:816px;background:#c0c0c0"></div>
<div class="a" style="left:1186px;top:138px;width:1px;height:816px;background:#c0c0c0"></div>
<div class="a" style="left:1250px;top:138px;width:1px;height:816px;background:#c0c0c0"></div>
<div class="a" style="left:35px;top:154px;width:1227px;height:1px;background:#c0c0c0"></div>
<div class="a" style="left:1px;top:154px;width:33px;height:1px;background:#9d9a8b"></div>
<div class="a" style="left:35px;top:171px;width:1227px;height:1px;background:#c0c0c0"></div>
<div class="a" style="left:1px;top:171px;width:33px;height:1px;background:#9d9a8b"></div>
<div class="a" style="left:35px;top:188px;width:1227px;height:1px;background:#c0c0c0"></div>
<div class="a" style="left:1px;top:188px;width:33px;height:1px;background:#9d9a8b"></div>
<div class="a" style="left:35px;top:205px;width:1227px;height:1px;background:#c0c0c0"></div>
<div class="a" style="left:1px;top:205px;width:33px;height:1px;background:#9d9a8b"></div>
<div class="a" style="left:35px;top:222px;width:1227px;height:1px;background:#c0c0c0"></div>
<div class="a" style="left:1px;top:222px;width:33px;height:1px;background:#9d9a8b"></div>
<div class="a" style="left:35px;top:239px;width:1227px;height:1px;background:#c0c0c0"></div>
<div class="a" style="left:1px;top:239px;width:33px;height:1px;background:#9d9a8b"></div>
<div class="a" style="left:35px;top:256px;width:1227px;height:1px;background:#c0c0c0"></div>
<div class="a" style="left:1px;top:256px;width:33px;height:1px;background:#9d9a8b"></div>
<div class="a" style="left:35px;top:273px;width:1227px;height:1px;background:#c0c0c0"></div>
<div class="a" style="left:1px;top:273px;width:33px;height:1px;background:#9d9a8b"></div>
<div class="a" style="left:35px;top:290px;width:1227px;height:1px;background:#c0c0c0"></div>
<div class="a" style="left:1px;top:290px;width:33px;height:1px;background:#9d9a8b"></div>
<div class="a" style="left:35px;top:307px;width:1227px;height:1px;background:#c0c0c0"></div>
<div class="a" style="left:1px;top:307px;width:33px;height:1px;background:#9d9a8b"></div>
<div class="a" style="left:35px;top:324px;width:1227px;height:1px;background:#c0c0c0"></div>
<div class="a" style="left:1px;top:324px;width:33px;height:1px;background:#9d9a8b"></div>
<div class="a" style="left:35px;top:341px;width:1227px;height:1px;background:#c0c0c0"></div>
<div class="a" style="left:1px;top:341px;width:33px;height:1px;background:#9d9a8b"></div>
<div class="a" style="left:35px;top:358px;width:1227px;height:1px;background:#c0c0c0"></div>
<div class="a" style="left:1px;top:358px;width:33px;height:1px;background:#9d9a8b"></div>
<div class="a" style="left:35px;top:375px;width:1227px;height:1px;background:#c0c0c0"></div>
<div class="a" style="left:1px;top:375px;width:33px;height:1px;background:#9d9a8b"></div>
<div class="a" style="left:35px;top:392px;width:1227px;height:1px;background:#c0c0c0"></div>
<div class="a" style="left:1px;top:392px;width:33px;height:1px;background:#9d9a8b"></div>
<div class="a" style="left:35px;top:409px;width:1227px;height:1px;background:#c0c0c0"></div>
<div class="a" style="left:1px;top:409px;width:33px;height:1px;background:#9d9a8b"></div>
<div class="a" style="left:35px;top:426px;width:1227px;height:1px;background:#c0c0c0"></div>
<div class="a" style="left:1px;top:426px;width:33px;height:1px;background:#9d9a8b"></div>
<div class="a" style="left:35px;top:443px;width:1227px;height:1px;background:#c0c0c0"></div>
<div class="a" style="left:1px;top:443px;width:33px;height:1px;background:#9d9a8b"></div>
<div class="a" style="left:35px;top:460px;width:1227px;height:1px;background:#c0c0c0"></div>
<div class="a" style="left:1px;top:460px;width:33px;height:1px;background:#9d9a8b"></div>
<div class="a" style="left:35px;top:477px;width:1227px;height:1px;background:#c0c0c0"></div>
<div class="a" style="left:1px;top:477px;width:33px;height:1px;background:#9d9a8b"></div>
<div class="a" style="left:35px;top:494px;width:1227px;height:1px;background:#c0c0c0"></div>
<div class="a" style="left:1px;top:494px;width:33px;height:1px;background:#9d9a8b"></div>
<div class="a" style="left:35px;top:511px;width:1227px;height:1px;background:#c0c0c0"></div>
<div class="a" style="left:1px;top:511px;width:33px;height:1px;background:#9d9a8b"></div>
<div class="a" style="left:35px;top:528px;width:1227px;height:1px;background:#c0c0c0"></div>
<div class="a" style="left:1px;top:528px;width:33px;height:1px;background:#9d9a8b"></div>
<div class="a" style="left:35px;top:545px;width:1227px;height:1px;background:#c0c0c0"></div>
<div class="a" style="left:1px;top:545px;width:33px;height:1px;background:#9d9a8b"></div>
<div class="a" style="left:35px;top:562px;width:1227px;height:1px;background:#c0c0c0"></div>
<div class="a" style="left:1px;top:562px;width:33px;height:1px;background:#9d9a8b"></div>
<div class="a" style="left:35px;top:579px;width:1227px;height:1px;background:#c0c0c0"></div>
<div class="a" style="left:1px;top:579px;width:33px;height:1px;background:#9d9a8b"></div>
<div class="a" style="left:35px;top:596px;width:1227px;height:1px;background:#c0c0c0"></div>
<div class="a" style="left:1px;top:596px;width:33px;height:1px;background:#9d9a8b"></div>
<div class="a" style="left:35px;top:613px;width:1227px;height:1px;background:#c0c0c0"></div>
<div class="a" style="left:1px;top:613px;width:33px;height:1px;background:#9d9a8b"></div>
<div class="a" style="left:35px;top:630px;width:1227px;height:1px;background:#c0c0c0"></div>
<div class="a" style="left:1px;top:630px;width:33px;height:1px;background:#9d9a8b"></div>
<div class="a" style="left:35px;top:647px;width:1227px;height:1px;background:#c0c0c0"></div>
<div class="a" style="left:1px;top:647px;width:33px;height:1px;background:#9d9a8b"></div>
<div class="a" style="left:35px;top:664px;width:1227px;height:1px;background:#c0c0c0"></div>
<div class="a" style="left:1px;top:664px;width:33px;height:1px;background:#9d9a8b"></div>
<div class="a" style="left:35px;top:681px;width:1227px;height:1px;background:#c0c0c0"></div>
<div class="a" style="left:1px;top:681px;width:33px;height:1px;background:#9d9a8b"></div>
<div class="a" style="left:35px;top:698px;width:1227px;height:1px;background:#c0c0c0"></div>
<div class="a" style="left:1px;top:698px;width:33px;height:1px;background:#9d9a8b"></div>
<div class="a" style="left:35px;top:715px;width:1227px;height:1px;background:#c0c0c0"></div>
<div class="a" style="left:1px;top:715px;width:33px;height:1px;background:#9d9a8b"></div>
<div class="a" style="left:35px;top:732px;width:1227px;height:1px;background:#c0c0c0"></div>
<div class="a" style="left:1px;top:732px;width:33px;height:1px;background:#9d9a8b"></div>
<div class="a" style="left:35px;top:749px;width:1227px;height:1px;background:#c0c0c0"></div>
<div class="a" style="left:1px;top:749px;width:33px;height:1px;background:#9d9a8b"></div>
<div class="a" style="left:35px;top:766px;width:1227px;height:1px;background:#c0c0c0"></div>
<div class="a" style="left:1px;top:766px;width:33px;height:1px;background:#9d9a8b"></div>
<div class="a" style="left:35px;top:783px;width:1227px;height:1px;background:#c0c0c0"></div>
<div class="a" style="left:1px;top:783px;width:33px;height:1px;background:#9d9a8b"></div>
<div class="a" style="left:35px;top:800px;width:1227px;height:1px;background:#c0c0c0"></div>
<div class="a" style="left:1px;top:800px;width:33px;height:1px;background:#9d9a8b"></div>
<div class="a" style="left:35px;top:817px;width:1227px;height:1px;background:#c0c0c0"></div>
<div class="a" style="left:1px;top:817px;width:33px;height:1px;background:#9d9a8b"></div>
<div class="a" style="left:35px;top:834px;width:1227px;height:1px;background:#c0c0c0"></div>
<div class="a" style="left:1px;top:834px;width:33px;height:1px;background:#9d9a8b"></div>
<div class="a" style="left:35px;top:851px;width:1227px;height:1px;background:#c0c0c0"></div>
<div class="a" style="left:1px;top:851px;width:33px;height:1px;background:#9d9a8b"></div>
<div class="a" style="left:35px;top:868px;width:1227px;height:1px;background:#c0c0c0"></div>
<div class="a" style="left:1px;top:868px;width:33px;height:1px;background:#9d9a8b"></div>
<div class="a" style="left:35px;top:885px;width:1227px;height:1px;background:#c0c0c0"></div>
<div class="a" style="left:1px;top:885px;width:33px;height:1px;background:#9d9a8b"></div>
<div class="a" style="left:35px;top:902px;width:1227px;height:1px;background:#c0c0c0"></div>
<div class="a" style="left:1px;top:902px;width:33px;height:1px;background:#9d9a8b"></div>
<div class="a" style="left:35px;top:919px;width:1227px;height:1px;background:#c0c0c0"></div>
<div class="a" style="left:1px;top:919px;width:33px;height:1px;background:#9d9a8b"></div>
<div class="a" style="left:35px;top:936px;width:1227px;height:1px;background:#c0c0c0"></div>
<div class="a" style="left:1px;top:936px;width:33px;height:1px;background:#9d9a8b"></div>
<div class="a" style="left:35px;top:953px;width:1227px;height:1px;background:#c0c0c0"></div>
<div class="a" style="left:1px;top:953px;width:33px;height:1px;background:#9d9a8b"></div>
<div class="a t" style="left:1px;top:138px;width:33px;height:16px;font-size:13px;line-height:16px;text-align:center;color:#000">7</div>
<div class="a t" style="left:1px;top:155px;width:33px;height:16px;font-size:13px;line-height:16px;text-align:center;color:#000">8</div>
<div class="a t" style="left:1px;top:172px;width:33px;height:16px;font-size:13px;line-height:16px;text-align:center;color:#000">9</div>
<div class="a t" style="left:1px;top:189px;width:33px;height:16px;font-size:13px;line-height:16px;text-align:center;color:#000">10</div>
<div class="a t" style="left:1px;top:206px;width:33px;height:16px;font-size:13px;line-height:16px;text-align:center;color:#000">11</div>
<div class="a t" style="left:1px;top:223px;width:33px;height:16px;font-size:13px;line-height:16px;text-align:center;color:#000">12</div>
<div class="a t" style="left:1px;top:240px;width:33px;height:16px;font-size:13px;line-height:16px;text-align:center;color:#000">13</div>
<div class="a t" style="left:1px;top:257px;width:33px;height:16px;font-size:13px;line-height:16px;text-align:center;color:#000">14</div>
<div class="a t" style="left:1px;top:274px;width:33px;height:16px;font-size:13px;line-height:16px;text-align:center;color:#000">15</div>
<div class="a t" style="left:1px;top:291px;width:33px;height:16px;font-size:13px;line-height:16px;text-align:center;color:#000">16</div>
<div class="a t" style="left:1px;top:308px;width:33px;height:16px;font-size:13px;line-height:16px;text-align:center;color:#000">17</div>
<div class="a" style="left:1px;top:340px;width:33px;height:2px;background:#8c897a"></div>
<div class="a" style="left:1px;top:325px;width:33px;height:16px;background:linear-gradient(90deg,#fbc884,#f8bf74)"></div>
<div class="a" style="left:1px;top:341px;width:34px;height:1px;background:#1a1208"></div>
<div class="a" style="left:34px;top:324px;width:1px;height:18px;background:#1a1208"></div>
<div class="a t" style="left:1px;top:325px;width:33px;height:16px;font-size:13px;line-height:16px;text-align:center;color:#000">18</div>
<div class="a t" style="left:1px;top:342px;width:33px;height:16px;font-size:13px;line-height:16px;text-align:center;color:#18207e">39</div>
<div class="a t" style="left:1px;top:359px;width:33px;height:16px;font-size:13px;line-height:16px;text-align:center;color:#18207e">40</div>
<div class="a t" style="left:1px;top:376px;width:33px;height:16px;font-size:13px;line-height:16px;text-align:center;color:#18207e">41</div>
<div class="a t" style="left:1px;top:393px;width:33px;height:16px;font-size:13px;line-height:16px;text-align:center;color:#18207e">42</div>
<div class="a" style="left:1px;top:425px;width:33px;height:2px;background:#8c897a"></div>
<div class="a t" style="left:1px;top:410px;width:33px;height:16px;font-size:13px;line-height:16px;text-align:center;color:#18207e">43</div>
<div class="a t" style="left:1px;top:427px;width:33px;height:16px;font-size:13px;line-height:16px;text-align:center;color:#18207e">51</div>
<div class="a" style="left:1px;top:459px;width:33px;height:2px;background:#8c897a"></div>
<div class="a t" style="left:1px;top:444px;width:33px;height:16px;font-size:13px;line-height:16px;text-align:center;color:#18207e">52</div>
<div class="a t" style="left:1px;top:461px;width:33px;height:16px;font-size:13px;line-height:16px;text-align:center;color:#18207e">78</div>
<div class="a t" style="left:1px;top:478px;width:33px;height:16px;font-size:13px;line-height:16px;text-align:center;color:#18207e">79</div>
<div class="a" style="left:1px;top:510px;width:33px;height:2px;background:#8c897a"></div>
<div class="a t" style="left:1px;top:495px;width:33px;height:16px;font-size:13px;line-height:16px;text-align:center;color:#18207e">80</div>
<div class="a" style="left:1px;top:527px;width:33px;height:2px;background:#8c897a"></div>
<div class="a t" style="left:1px;top:512px;width:33px;height:16px;font-size:13px;line-height:16px;text-align:center;color:#18207e">90</div>
<div class="a" style="left:1px;top:544px;width:33px;height:2px;background:#8c897a"></div>
<div class="a t" style="left:1px;top:529px;width:33px;height:16px;font-size:13px;line-height:16px;text-align:center;color:#18207e">93</div>
<div class="a" style="left:1px;top:561px;width:33px;height:2px;background:#8c897a"></div>
<div class="a t" style="left:1px;top:546px;width:33px;height:16px;font-size:13px;line-height:16px;text-align:center;color:#18207e">96</div>
<div class="a" style="left:1px;top:578px;width:33px;height:2px;background:#8c897a"></div>
<div class="a t" style="left:1px;top:563px;width:33px;height:16px;font-size:13px;line-height:16px;text-align:center;color:#18207e">119</div>
<div class="a" style="left:1px;top:595px;width:33px;height:2px;background:#8c897a"></div>
<div class="a t" style="left:1px;top:580px;width:33px;height:16px;font-size:13px;line-height:16px;text-align:center;color:#18207e">124</div>
<div class="a t" style="left:1px;top:597px;width:33px;height:16px;font-size:13px;line-height:16px;text-align:center;color:#18207e">129</div>
<div class="a" style="left:1px;top:629px;width:33px;height:2px;background:#8c897a"></div>
<div class="a t" style="left:1px;top:614px;width:33px;height:16px;font-size:13px;line-height:16px;text-align:center;color:#18207e">130</div>
<div class="a t" style="left:1px;top:631px;width:33px;height:16px;font-size:13px;line-height:16px;text-align:center;color:#18207e">133</div>
<div class="a t" style="left:1px;top:648px;width:33px;height:16px;font-size:13px;line-height:16px;text-align:center;color:#18207e">134</div>
<div class="a t" style="left:1px;top:665px;width:33px;height:16px;font-size:13px;line-height:16px;text-align:center;color:#18207e">135</div>
<div class="a t" style="left:1px;top:682px;width:33px;height:16px;font-size:13px;line-height:16px;text-align:center;color:#18207e">136</div>
<div class="a t" style="left:1px;top:699px;width:33px;height:16px;font-size:13px;line-height:16px;text-align:center;color:#18207e">137</div>
<div class="a" style="left:1px;top:731px;width:33px;height:2px;background:#8c897a"></div>
<div class="a t" style="left:1px;top:716px;width:33px;height:16px;font-size:13px;line-height:16px;text-align:center;color:#18207e">138</div>
<div class="a t" style="left:1px;top:733px;width:33px;height:16px;font-size:13px;line-height:16px;text-align:center;color:#18207e">148</div>
<div class="a" style="left:1px;top:765px;width:33px;height:2px;background:#8c897a"></div>
<div class="a t" style="left:1px;top:750px;width:33px;height:16px;font-size:13px;line-height:16px;text-align:center;color:#18207e">149</div>
<div class="a t" style="left:1px;top:767px;width:33px;height:16px;font-size:13px;line-height:16px;text-align:center;color:#18207e">152</div>
<div class="a t" style="left:1px;top:784px;width:33px;height:16px;font-size:13px;line-height:16px;text-align:center;color:#18207e">153</div>
<div class="a" style="left:1px;top:816px;width:33px;height:2px;background:#8c897a"></div>
<div class="a t" style="left:1px;top:801px;width:33px;height:16px;font-size:13px;line-height:16px;text-align:center;color:#18207e">154</div>
<div class="a t" style="left:1px;top:818px;width:33px;height:16px;font-size:13px;line-height:16px;text-align:center;color:#18207e">162</div>
<div class="a t" style="left:1px;top:835px;width:33px;height:16px;font-size:13px;line-height:16px;text-align:center;color:#18207e">163</div>
<div class="a t" style="left:1px;top:852px;width:33px;height:16px;font-size:13px;line-height:16px;text-align:center;color:#18207e">164</div>
<div class="a" style="left:1px;top:884px;width:33px;height:2px;background:#8c897a"></div>
<div class="a t" style="left:1px;top:869px;width:33px;height:16px;font-size:13px;line-height:16px;text-align:center;color:#18207e">165</div>
<div class="a t" style="left:1px;top:886px;width:33px;height:16px;font-size:13px;line-height:16px;text-align:center;color:#000">2204</div>
<div class="a t" style="left:1px;top:903px;width:33px;height:16px;font-size:13px;line-height:16px;text-align:center;color:#000">2205</div>
<div class="a t" style="left:1px;top:920px;width:33px;height:16px;font-size:13px;line-height:16px;text-align:center;color:#000">2206</div>
<div class="a t" style="left:1px;top:937px;width:33px;height:16px;font-size:13px;line-height:16px;text-align:center;color:#000">2207</div>
<div class="a" style="left:35px;top:138px;width:255px;height:16px;background:#fff"></div>
<div class="a t" style="left:37px;top:138px;height:16px;font-size:13px;line-height:16px;white-space:nowrap">Staphylococcus aureus (strain MRSA252)</div>
<div class="a" style="left:35px;top:155px;width:127px;height:16px;background:#fff"></div>
<div class="a t" style="left:37px;top:155px;height:16px;font-size:13px;line-height:16px;white-space:nowrap">Pvalues = true</div>
<div class="a" style="left:35px;top:172px;width:191px;height:16px;background:#fff"></div>
<div class="a t" style="left:37px;top:172px;height:16px;font-size:13px;line-height:16px;white-space:nowrap">Calculation Summary:</div>
<div class="a" style="left:35px;top:189px;width:511px;height:16px;background:#fff"></div>
<div class="a t" style="left:37px;top:189px;height:16px;font-size:13px;line-height:16px;white-space:nowrap">640 probes met the [Avg_LogFC_MurE] &gt; .25 AND [PVALUEMurE] &lt; .05 criteria.</div>
<div class="a" style="left:35px;top:206px;width:319px;height:16px;background:#fff"></div>
<div class="a t" style="left:37px;top:206px;height:16px;font-size:13px;line-height:16px;white-space:nowrap">626 probes meeting the filter linked to a UniProt ID.</div>
<div class="a" style="left:35px;top:223px;width:319px;height:16px;background:#fff"></div>
<div class="a t" style="left:37px;top:223px;height:16px;font-size:13px;line-height:16px;white-space:nowrap">266 genes meeting the criterion linked to a GO term.</div>
<div class="a" style="left:35px;top:240px;width:191px;height:16px;background:#fff"></div>
<div class="a t" style="left:37px;top:240px;height:16px;font-size:13px;line-height:16px;white-space:nowrap">5484 Probes in this dataset</div>
<div class="a" style="left:35px;top:257px;width:255px;height:16px;background:#fff"></div>
<div class="a t" style="left:37px;top:257px;height:16px;font-size:13px;line-height:16px;white-space:nowrap">5272 Probes linked to a UniProt ID.</div>
<div class="a" style="left:35px;top:274px;width:255px;height:16px;background:#fff"></div>
<div class="a t" style="left:37px;top:274px;height:16px;font-size:13px;line-height:16px;white-space:nowrap">1818 Genes linked to a GO term.</div>
<div class="a" style="left:35px;top:291px;width:511px;height:16px;background:#fff"></div>
<div class="a t" style="left:37px;top:291px;height:16px;font-size:13px;line-height:16px;white-space:nowrap">The z score is based on an N of 1818 and a R of 266 distinct genes in the GO.</div>
<div class="c" style="left:35px;top:325px;width:63px">GOID</div>
<div class="dd" style="left:82px;top:326px"></div>
<div class="c" style="left:99px;top:325px;width:63px">GO Name</div>
<div class="dd" style="left:146px;top:326px"></div>
<div class="c" style="left:163px;top:325px;width:63px">GO Type</div>
<div class="dd" style="left:210px;top:326px"></div>
<div class="c" style="left:227px;top:325px;width:63px">Number Changed</div>
<div class="dd" style="left:274px;top:326px"></div>
<div class="c" style="left:291px;top:325px;width:63px">Number Measured</div>
<div class="dd" style="left:338px;top:326px"></div>
<div class="c" style="left:355px;top:325px;width:63px">Number on MAPP</div>
<div class="dd" style="left:402px;top:326px"></div>
<div class="c" style="left:419px;top:325px;width:63px">Percent Changed</div>
<div class="dd" style="left:466px;top:326px"></div>
<div class="c" style="left:483px;top:325px;width:63px">Percent Present</div>
<div class="dd" style="left:530px;top:326px"></div>
<div class="c" style="left:547px;top:325px;width:63px">Number Changed</div>
<div class="dd b" style="left:594px;top:326px"></div>
<div class="c" style="left:611px;top:325px;width:63px">Number Measured</div>
<div class="dd" style="left:658px;top:326px"></div>
<div class="c" style="left:675px;top:325px;width:63px">Number on MAPP</div>
<div class="dd" style="left:722px;top:326px"></div>
<div class="c" style="left:739px;top:325px;width:63px">Percent Changed</div>
<div class="dd" style="left:786px;top:326px"></div>
<div class="c" style="left:803px;top:325px;width:63px">Percent Present</div>
<div class="dd" style="left:850px;top:326px"></div>
<div class="c" style="left:867px;top:325px;width:63px">Z Score</div>
<div class="dd b" style="left:914px;top:326px"></div>
<div class="c" style="left:931px;top:325px;width:63px">PermuteP</div>
<div class="dd b" style="left:978px;top:326px"></div>
<div class="c" style="left:995px;top:325px;width:63px">AdjustedP</div>
<div class="dd" style="left:1042px;top:326px"></div>
<div class="a" style="left:546px;top:323px;width:66px;height:20px;border:2px solid #000;pointer-events:none"></div>
<div class="a" style="left:607px;top:340px;width:6px;height:5px;background:#000"></div>
<div class="c r" style="left:35px;top:342px;width:63px">9088</div>
<div class="c" style="left:99px;top:342px;width:63px">threonine biosynthesis</div>
<div class="c" style="left:163px;top:342px;width:63px">P</div>
<div class="c r" style="left:227px;top:342px;width:63px">4</div>
<div class="c r" style="left:291px;top:342px;width:63px">4</div>
<div class="c r" style="left:355px;top:342px;width:63px">4</div>
<div class="c r" style="left:419px;top:342px;width:63px">100</div>
<div class="c r" style="left:483px;top:342px;width:63px">100</div>
<div class="c r" style="left:547px;top:342px;width:63px">4</div>
<div class="c r" style="left:611px;top:342px;width:63px">4</div>
<div class="c r" style="left:675px;top:342px;width:63px">4</div>
<div class="c r" style="left:739px;top:342px;width:63px">100</div>
<div class="c r" style="left:803px;top:342px;width:63px">100</div>
<div class="c r" style="left:867px;top:342px;width:63px">4.835</div>
<div class="c r" style="left:931px;top:342px;width:63px">0</div>
<div class="c r" style="left:995px;top:342px;width:63px">0.046</div>
<div class="c r" style="left:35px;top:359px;width:63px">6566</div>
<div class="c" style="left:99px;top:359px;width:63px">threonine metabolism</div>
<div class="c" style="left:163px;top:359px;width:63px">P</div>
<div class="c r" style="left:227px;top:359px;width:63px">1</div>
<div class="c r" style="left:291px;top:359px;width:63px">1</div>
<div class="c r" style="left:355px;top:359px;width:63px">1</div>
<div class="c r" style="left:419px;top:359px;width:63px">100</div>
<div class="c r" style="left:483px;top:359px;width:63px">100</div>
<div class="c r" style="left:547px;top:359px;width:63px">4</div>
<div class="c r" style="left:611px;top:359px;width:63px">4</div>
<div class="c r" style="left:675px;top:359px;width:63px">4</div>
<div class="c r" style="left:739px;top:359px;width:63px">100</div>
<div class="c r" style="left:803px;top:359px;width:63px">100</div>
<div class="c r" style="left:867px;top:359px;width:63px">4.835</div>
<div class="c r" style="left:931px;top:359px;width:63px">0</div>
<div class="c r" style="left:995px;top:359px;width:63px">0.046</div>
<div class="c r" style="left:35px;top:376px;width:63px">6551</div>
<div class="c" style="left:99px;top:376px;width:63px">leucine metabolism</div>
<div class="c" style="left:163px;top:376px;width:63px">P</div>
<div class="c r" style="left:227px;top:376px;width:63px">0</div>
<div class="c r" style="left:291px;top:376px;width:63px">0</div>
<div class="c r" style="left:355px;top:376px;width:63px">0</div>
<div class="c r" style="left:419px;top:376px;width:63px">0</div>
<div class="c r" style="left:483px;top:376px;width:63px">0</div>
<div class="c r" style="left:547px;top:376px;width:63px">4</div>
<div class="c r" style="left:611px;top:376px;width:63px">4</div>
<div class="c r" style="left:675px;top:376px;width:63px">4</div>
<div class="c r" style="left:739px;top:376px;width:63px">100</div>
<div class="c r" style="left:803px;top:376px;width:63px">100</div>
<div class="c r" style="left:867px;top:376px;width:63px">4.835</div>
<div class="c r" style="left:931px;top:376px;width:63px">0</div>
<div class="c r" style="left:995px;top:376px;width:63px">0.046</div>
<div class="c r" style="left:35px;top:393px;width:63px">19877</div>
<div class="c" style="left:99px;top:393px;width:63px">diaminopimelate</div>
<div class="c" style="left:163px;top:393px;width:63px">P</div>
<div class="c r" style="left:227px;top:393px;width:63px">4</div>
<div class="c r" style="left:291px;top:393px;width:63px">4</div>
<div class="c r" style="left:355px;top:393px;width:63px">4</div>
<div class="c r" style="left:419px;top:393px;width:63px">100</div>
<div class="c r" style="left:483px;top:393px;width:63px">100</div>
<div class="c r" style="left:547px;top:393px;width:63px">4</div>
<div class="c r" style="left:611px;top:393px;width:63px">4</div>
<div class="c r" style="left:675px;top:393px;width:63px">4</div>
<div class="c r" style="left:739px;top:393px;width:63px">100</div>
<div class="c r" style="left:803px;top:393px;width:63px">100</div>
<div class="c r" style="left:867px;top:393px;width:63px">4.835</div>
<div class="c r" style="left:931px;top:393px;width:63px">0</div>
<div class="c r" style="left:995px;top:393px;width:63px">0.046</div>
<div class="c r" style="left:35px;top:410px;width:63px">9098</div>
<div class="c" style="left:99px;top:410px;width:63px">leucine biosynthesis</div>
<div class="c" style="left:163px;top:410px;width:63px">P</div>
<div class="c r" style="left:227px;top:410px;width:63px">4</div>
<div class="c r" style="left:291px;top:410px;width:63px">4</div>
<div class="c r" style="left:355px;top:410px;width:63px">4</div>
<div class="c r" style="left:419px;top:410px;width:63px">100</div>
<div class="c r" style="left:483px;top:410px;width:63px">100</div>
<div class="c r" style="left:547px;top:410px;width:63px">4</div>
<div class="c r" style="left:611px;top:410px;width:63px">4</div>
<div class="c r" style="left:675px;top:410px;width:63px">4</div>
<div class="c r" style="left:739px;top:410px;width:63px">100</div>
<div class="c r" style="left:803px;top:410px;width:63px">100</div>
<div class="c r" style="left:867px;top:410px;width:63px">4.835</div>
<div class="c r" style="left:931px;top:410px;width:63px">0</div>
<div class="c r" style="left:995px;top:410px;width:63px">0.046</div>
<div class="c r" style="left:35px;top:427px;width:63px">8113</div>
<div class="c" style="left:99px;top:427px;width:63px">peptide-methionine</div>
<div class="c" style="left:163px;top:427px;width:63px">F</div>
<div class="c r" style="left:227px;top:427px;width:63px">3</div>
<div class="c r" style="left:291px;top:427px;width:63px">3</div>
<div class="c r" style="left:355px;top:427px;width:63px">3</div>
<div class="c r" style="left:419px;top:427px;width:63px">100</div>
<div class="c r" style="left:483px;top:427px;width:63px">100</div>
<div class="c r" style="left:547px;top:427px;width:63px">3</div>
<div class="c r" style="left:611px;top:427px;width:63px">3</div>
<div class="c r" style="left:675px;top:427px;width:63px">3</div>
<div class="c r" style="left:739px;top:427px;width:63px">100</div>
<div class="c r" style="left:803px;top:427px;width:63px">100</div>
<div class="c r" style="left:867px;top:427px;width:63px">4.186</div>
<div class="c r" style="left:931px;top:427px;width:63px">0</div>
<div class="c r" style="left:995px;top:427px;width:63px">0.321</div>
<div class="c r" style="left:35px;top:444px;width:63px">9086</div>
<div class="c" style="left:99px;top:444px;width:63px">methionine biosynthesis</div>
<div class="c" style="left:163px;top:444px;width:63px">P</div>
<div class="c r" style="left:227px;top:444px;width:63px">4</div>
<div class="c r" style="left:291px;top:444px;width:63px">5</div>
<div class="c r" style="left:355px;top:444px;width:63px">5</div>
<div class="c r" style="left:419px;top:444px;width:63px">80</div>
<div class="c r" style="left:483px;top:444px;width:63px">100</div>
<div class="c r" style="left:547px;top:444px;width:63px">4</div>
<div class="c r" style="left:611px;top:444px;width:63px">5</div>
<div class="c r" style="left:675px;top:444px;width:63px">5</div>
<div class="c r" style="left:739px;top:444px;width:63px">80</div>
<div class="c r" style="left:803px;top:444px;width:63px">100</div>
<div class="c r" style="left:867px;top:444px;width:63px">4.14</div>
<div class="c r" style="left:931px;top:444px;width:63px">0</div>
<div class="c r" style="left:995px;top:444px;width:63px">0.377</div>
<div class="c r" style="left:35px;top:461px;width:63px">9097</div>
<div class="c" style="left:99px;top:461px;width:63px">isoleucine biosynthesis</div>
<div class="c" style="left:163px;top:461px;width:63px">P</div>
<div class="c r" style="left:227px;top:461px;width:63px">4</div>
<div class="c r" style="left:291px;top:461px;width:63px">4</div>
<div class="c r" style="left:355px;top:461px;width:63px">4</div>
<div class="c r" style="left:419px;top:461px;width:63px">100</div>
<div class="c r" style="left:483px;top:461px;width:63px">100</div>
<div class="c r" style="left:547px;top:461px;width:63px">4</div>
<div class="c r" style="left:611px;top:461px;width:63px">4</div>
<div class="c r" style="left:675px;top:461px;width:63px">4</div>
<div class="c r" style="left:739px;top:461px;width:63px">100</div>
<div class="c r" style="left:803px;top:461px;width:63px">100</div>
<div class="c r" style="left:867px;top:461px;width:63px">4.835</div>
<div class="c r" style="left:931px;top:461px;width:63px">0.002</div>
<div class="c r" style="left:995px;top:461px;width:63px">0.046</div>
<div class="c r" style="left:35px;top:478px;width:63px">6549</div>
<div class="c" style="left:99px;top:478px;width:63px">isoleucine metabolism</div>
<div class="c" style="left:163px;top:478px;width:63px">P</div>
<div class="c r" style="left:227px;top:478px;width:63px">0</div>
<div class="c r" style="left:291px;top:478px;width:63px">0</div>
<div class="c r" style="left:355px;top:478px;width:63px">0</div>
<div class="c r" style="left:419px;top:478px;width:63px">0</div>
<div class="c r" style="left:483px;top:478px;width:63px">0</div>
<div class="c r" style="left:547px;top:478px;width:63px">4</div>
<div class="c r" style="left:611px;top:478px;width:63px">4</div>
<div class="c r" style="left:675px;top:478px;width:63px">4</div>
<div class="c r" style="left:739px;top:478px;width:63px">100</div>
<div class="c r" style="left:803px;top:478px;width:63px">100</div>
<div class="c r" style="left:867px;top:478px;width:63px">4.835</div>
<div class="c r" style="left:931px;top:478px;width:63px">0.002</div>
<div class="c r" style="left:995px;top:478px;width:63px">0.046</div>
<div class="c r" style="left:35px;top:495px;width:63px">6555</div>
<div class="c" style="left:99px;top:495px;width:63px">methionine metabolism</div>
<div class="c" style="left:163px;top:495px;width:63px">P</div>
<div class="c r" style="left:227px;top:495px;width:63px">0</div>
<div class="c r" style="left:291px;top:495px;width:63px">1</div>
<div class="c r" style="left:355px;top:495px;width:63px">1</div>
<div class="c r" style="left:419px;top:495px;width:63px">0</div>
<div class="c r" style="left:483px;top:495px;width:63px">100</div>
<div class="c r" style="left:547px;top:495px;width:63px">4</div>
<div class="c r" style="left:611px;top:495px;width:63px">6</div>
<div class="c r" style="left:675px;top:495px;width:63px">6</div>
<div class="c r" style="left:739px;top:495px;width:63px">66.66666</div>
<div class="c r" style="left:803px;top:495px;width:63px">100</div>
<div class="c r" style="left:867px;top:495px;width:63px">3.611</div>
<div class="c r" style="left:931px;top:495px;width:63px">0.002</div>
<div class="c r" style="left:995px;top:495px;width:63px">0.528</div>
<div class="c r" style="left:35px;top:512px;width:63px">16639</div>
<div class="c" style="left:99px;top:512px;width:63px">oxidoreductase</div>
<div class="c" style="left:163px;top:512px;width:63px">F</div>
<div class="c r" style="left:227px;top:512px;width:63px">2</div>
<div class="c r" style="left:291px;top:512px;width:63px">2</div>
<div class="c r" style="left:355px;top:512px;width:63px">2</div>
<div class="c r" style="left:419px;top:512px;width:63px">100</div>
<div class="c r" style="left:483px;top:512px;width:63px">100</div>
<div class="c r" style="left:547px;top:512px;width:63px">3</div>
<div class="c r" style="left:611px;top:512px;width:63px">3</div>
<div class="c r" style="left:675px;top:512px;width:63px">3</div>
<div class="c r" style="left:739px;top:512px;width:63px">100</div>
<div class="c r" style="left:803px;top:512px;width:63px">100</div>
<div class="c r" style="left:867px;top:512px;width:63px">4.186</div>
<div class="c r" style="left:931px;top:512px;width:63px">0.005</div>
<div class="c r" style="left:995px;top:512px;width:63px">0.321</div>
<div class="c r" style="left:35px;top:529px;width:63px">16671</div>
<div class="c" style="left:99px;top:529px;width:63px">oxidoreductase</div>
<div class="c" style="left:163px;top:529px;width:63px">F</div>
<div class="c r" style="left:227px;top:529px;width:63px">2</div>
<div class="c r" style="left:291px;top:529px;width:63px">3</div>
<div class="c r" style="left:355px;top:529px;width:63px">3</div>
<div class="c r" style="left:419px;top:529px;width:63px">66.66666</div>
<div class="c r" style="left:483px;top:529px;width:63px">100</div>
<div class="c r" style="left:547px;top:529px;width:63px">3</div>
<div class="c r" style="left:611px;top:529px;width:63px">4</div>
<div class="c r" style="left:675px;top:529px;width:63px">4</div>
<div class="c r" style="left:739px;top:529px;width:63px">75</div>
<div class="c r" style="left:803px;top:529px;width:63px">100</div>
<div class="c r" style="left:867px;top:529px;width:63px">3.419</div>
<div class="c r" style="left:931px;top:529px;width:63px">0.006</div>
<div class="c r" style="left:995px;top:529px;width:63px">0.738</div>
<div class="c r" style="left:35px;top:546px;width:63px">6561</div>
<div class="c" style="left:99px;top:546px;width:63px">proline biosynthesis</div>
<div class="c" style="left:163px;top:546px;width:63px">P</div>
<div class="c r" style="left:227px;top:546px;width:63px">3</div>
<div class="c r" style="left:291px;top:546px;width:63px">4</div>
<div class="c r" style="left:355px;top:546px;width:63px">4</div>
<div class="c r" style="left:419px;top:546px;width:63px">75</div>
<div class="c r" style="left:483px;top:546px;width:63px">100</div>
<div class="c r" style="left:547px;top:546px;width:63px">3</div>
<div class="c r" style="left:611px;top:546px;width:63px">4</div>
<div class="c r" style="left:675px;top:546px;width:63px">4</div>
<div class="c r" style="left:739px;top:546px;width:63px">75</div>
<div class="c r" style="left:803px;top:546px;width:63px">100</div>
<div class="c r" style="left:867px;top:546px;width:63px">3.419</div>
<div class="c r" style="left:931px;top:546px;width:63px">0.007</div>
<div class="c r" style="left:995px;top:546px;width:63px">0.738</div>
<div class="c r" style="left:35px;top:563px;width:63px">16847</div>
<div class="c" style="left:99px;top:563px;width:63px">1-aminocyclopropane</div>
<div class="c" style="left:163px;top:563px;width:63px">F</div>
<div class="c r" style="left:227px;top:563px;width:63px">2</div>
<div class="c r" style="left:291px;top:563px;width:63px">2</div>
<div class="c r" style="left:355px;top:563px;width:63px">2</div>
<div class="c r" style="left:419px;top:563px;width:63px">100</div>
<div class="c r" style="left:483px;top:563px;width:63px">100</div>
<div class="c r" style="left:547px;top:563px;width:63px">2</div>
<div class="c r" style="left:611px;top:563px;width:63px">2</div>
<div class="c r" style="left:675px;top:563px;width:63px">2</div>
<div class="c r" style="left:739px;top:563px;width:63px">100</div>
<div class="c r" style="left:803px;top:563px;width:63px">100</div>
<div class="c r" style="left:867px;top:563px;width:63px">3.417</div>
<div class="c r" style="left:931px;top:563px;width:63px">0.018</div>
<div class="c r" style="left:995px;top:563px;width:63px">0.991</div>
<div class="c r" style="left:35px;top:580px;width:63px">4587</div>
<div class="c" style="left:99px;top:580px;width:63px">ornithine-oxo-acid</div>
<div class="c" style="left:163px;top:580px;width:63px">F</div>
<div class="c r" style="left:227px;top:580px;width:63px">2</div>
<div class="c r" style="left:291px;top:580px;width:63px">2</div>
<div class="c r" style="left:355px;top:580px;width:63px">2</div>
<div class="c r" style="left:419px;top:580px;width:63px">100</div>
<div class="c r" style="left:483px;top:580px;width:63px">100</div>
<div class="c r" style="left:547px;top:580px;width:63px">2</div>
<div class="c r" style="left:611px;top:580px;width:63px">2</div>
<div class="c r" style="left:675px;top:580px;width:63px">2</div>
<div class="c r" style="left:739px;top:580px;width:63px">100</div>
<div class="c r" style="left:803px;top:580px;width:63px">100</div>
<div class="c r" style="left:867px;top:580px;width:63px">3.417</div>
<div class="c r" style="left:931px;top:580px;width:63px">0.021</div>
<div class="c r" style="left:995px;top:580px;width:63px">0.991</div>
<div class="c r" style="left:35px;top:597px;width:63px">6560</div>
<div class="c" style="left:99px;top:597px;width:63px">proline metabolism</div>
<div class="c" style="left:163px;top:597px;width:63px">P</div>
<div class="c r" style="left:227px;top:597px;width:63px">0</div>
<div class="c r" style="left:291px;top:597px;width:63px">0</div>
<div class="c r" style="left:355px;top:597px;width:63px">0</div>
<div class="c r" style="left:419px;top:597px;width:63px">0</div>
<div class="c r" style="left:483px;top:597px;width:63px">0</div>
<div class="c r" style="left:547px;top:597px;width:63px">3</div>
<div class="c r" style="left:611px;top:597px;width:63px">5</div>
<div class="c r" style="left:675px;top:597px;width:63px">5</div>
<div class="c r" style="left:739px;top:597px;width:63px">60</div>
<div class="c r" style="left:803px;top:597px;width:63px">100</div>
<div class="c r" style="left:867px;top:597px;width:63px">2.874</div>
<div class="c r" style="left:931px;top:597px;width:63px">0.024</div>
<div class="c r" style="left:995px;top:597px;width:63px">0.999</div>
<div class="c r" style="left:35px;top:614px;width:63px">6537</div>
<div class="c" style="left:99px;top:614px;width:63px">glutamate biosynthesis</div>
<div class="c" style="left:163px;top:614px;width:63px">P</div>
<div class="c r" style="left:227px;top:614px;width:63px">3</div>
<div class="c r" style="left:291px;top:614px;width:63px">5</div>
<div class="c r" style="left:355px;top:614px;width:63px">5</div>
<div class="c r" style="left:419px;top:614px;width:63px">60</div>
<div class="c r" style="left:483px;top:614px;width:63px">100</div>
<div class="c r" style="left:547px;top:614px;width:63px">3</div>
<div class="c r" style="left:611px;top:614px;width:63px">5</div>
<div class="c r" style="left:675px;top:614px;width:63px">5</div>
<div class="c r" style="left:739px;top:614px;width:63px">60</div>
<div class="c r" style="left:803px;top:614px;width:63px">100</div>
<div class="c r" style="left:867px;top:614px;width:63px">2.874</div>
<div class="c r" style="left:931px;top:614px;width:63px">0.024</div>
<div class="c r" style="left:995px;top:614px;width:63px">0.999</div>
<div class="c r" style="left:35px;top:631px;width:63px">4437</div>
<div class="c" style="left:99px;top:631px;width:63px">inositol or phosphatidylinositol</div>
<div class="c" style="left:163px;top:631px;width:63px">F</div>
<div class="c r" style="left:227px;top:631px;width:63px">2</div>
<div class="c r" style="left:291px;top:631px;width:63px">2</div>
<div class="c r" style="left:355px;top:631px;width:63px">2</div>
<div class="c r" style="left:419px;top:631px;width:63px">100</div>
<div class="c r" style="left:483px;top:631px;width:63px">100</div>
<div class="c r" style="left:547px;top:631px;width:63px">2</div>
<div class="c r" style="left:611px;top:631px;width:63px">2</div>
<div class="c r" style="left:675px;top:631px;width:63px">2</div>
<div class="c r" style="left:739px;top:631px;width:63px">100</div>
<div class="c r" style="left:803px;top:631px;width:63px">100</div>
<div class="c r" style="left:867px;top:631px;width:63px">3.417</div>
<div class="c r" style="left:931px;top:631px;width:63px">0.026</div>
<div class="c r" style="left:995px;top:631px;width:63px">0.991</div>
<div class="c r" style="left:35px;top:648px;width:63px">3861</div>
<div class="c" style="left:99px;top:648px;width:63px">3-isopropylmalate</div>
<div class="c" style="left:163px;top:648px;width:63px">F</div>
<div class="c r" style="left:227px;top:648px;width:63px">2</div>
<div class="c r" style="left:291px;top:648px;width:63px">2</div>
<div class="c r" style="left:355px;top:648px;width:63px">2</div>
<div class="c r" style="left:419px;top:648px;width:63px">100</div>
<div class="c r" style="left:483px;top:648px;width:63px">100</div>
<div class="c r" style="left:547px;top:648px;width:63px">2</div>
<div class="c r" style="left:611px;top:648px;width:63px">2</div>
<div class="c r" style="left:675px;top:648px;width:63px">2</div>
<div class="c r" style="left:739px;top:648px;width:63px">100</div>
<div class="c r" style="left:803px;top:648px;width:63px">100</div>
<div class="c r" style="left:867px;top:648px;width:63px">3.417</div>
<div class="c r" style="left:931px;top:648px;width:63px">0.026</div>
<div class="c r" style="left:995px;top:648px;width:63px">0.991</div>
<div class="c r" style="left:35px;top:665px;width:63px">8137</div>
<div class="c" style="left:99px;top:665px;width:63px">NADH dehydrogenase</div>
<div class="c" style="left:163px;top:665px;width:63px">F</div>
<div class="c r" style="left:227px;top:665px;width:63px">3</div>
<div class="c r" style="left:291px;top:665px;width:63px">5</div>
<div class="c r" style="left:355px;top:665px;width:63px">5</div>
<div class="c r" style="left:419px;top:665px;width:63px">60</div>
<div class="c r" style="left:483px;top:665px;width:63px">100</div>
<div class="c r" style="left:547px;top:665px;width:63px">3</div>
<div class="c r" style="left:611px;top:665px;width:63px">5</div>
<div class="c r" style="left:675px;top:665px;width:63px">5</div>
<div class="c r" style="left:739px;top:665px;width:63px">60</div>
<div class="c r" style="left:803px;top:665px;width:63px">100</div>
<div class="c r" style="left:867px;top:665px;width:63px">2.874</div>
<div class="c r" style="left:931px;top:665px;width:63px">0.026</div>
<div class="c r" style="left:995px;top:665px;width:63px">0.999</div>
<div class="c r" style="left:35px;top:682px;width:63px">50136</div>
<div class="c" style="left:99px;top:682px;width:63px">NADH dehydrogenase</div>
<div class="c" style="left:163px;top:682px;width:63px">F</div>
<div class="c r" style="left:227px;top:682px;width:63px">0</div>
<div class="c r" style="left:291px;top:682px;width:63px">0</div>
<div class="c r" style="left:355px;top:682px;width:63px">0</div>
<div class="c r" style="left:419px;top:682px;width:63px">0</div>
<div class="c r" style="left:483px;top:682px;width:63px">0</div>
<div class="c r" style="left:547px;top:682px;width:63px">3</div>
<div class="c r" style="left:611px;top:682px;width:63px">5</div>
<div class="c r" style="left:675px;top:682px;width:63px">5</div>
<div class="c r" style="left:739px;top:682px;width:63px">60</div>
<div class="c r" style="left:803px;top:682px;width:63px">100</div>
<div class="c r" style="left:867px;top:682px;width:63px">2.874</div>
<div class="c r" style="left:931px;top:682px;width:63px">0.026</div>
<div class="c r" style="left:995px;top:682px;width:63px">0.999</div>
<div class="c r" style="left:35px;top:699px;width:63px">16655</div>
<div class="c" style="left:99px;top:699px;width:63px">oxidoreductase</div>
<div class="c" style="left:163px;top:699px;width:63px">F</div>
<div class="c r" style="left:227px;top:699px;width:63px">0</div>
<div class="c r" style="left:291px;top:699px;width:63px">0</div>
<div class="c r" style="left:355px;top:699px;width:63px">0</div>
<div class="c r" style="left:419px;top:699px;width:63px">0</div>
<div class="c r" style="left:483px;top:699px;width:63px">0</div>
<div class="c r" style="left:547px;top:699px;width:63px">3</div>
<div class="c r" style="left:611px;top:699px;width:63px">5</div>
<div class="c r" style="left:675px;top:699px;width:63px">5</div>
<div class="c r" style="left:739px;top:699px;width:63px">60</div>
<div class="c r" style="left:803px;top:699px;width:63px">100</div>
<div class="c r" style="left:867px;top:699px;width:63px">2.874</div>
<div class="c r" style="left:931px;top:699px;width:63px">0.026</div>
<div class="c r" style="left:995px;top:699px;width:63px">0.999</div>
<div class="c r" style="left:35px;top:716px;width:63px">3954</div>
<div class="c" style="left:99px;top:716px;width:63px">NADH dehydrogenase</div>
<div class="c" style="left:163px;top:716px;width:63px">F</div>
<div class="c r" style="left:227px;top:716px;width:63px">0</div>
<div class="c r" style="left:291px;top:716px;width:63px">0</div>
<div class="c r" style="left:355px;top:716px;width:63px">0</div>
<div class="c r" style="left:419px;top:716px;width:63px">0</div>
<div class="c r" style="left:483px;top:716px;width:63px">0</div>
<div class="c r" style="left:547px;top:716px;width:63px">3</div>
<div class="c r" style="left:611px;top:716px;width:63px">5</div>
<div class="c r" style="left:675px;top:716px;width:63px">5</div>
<div class="c r" style="left:739px;top:716px;width:63px">60</div>
<div class="c r" style="left:803px;top:716px;width:63px">100</div>
<div class="c r" style="left:867px;top:716px;width:63px">2.874</div>
<div class="c r" style="left:931px;top:716px;width:63px">0.026</div>
<div class="c r" style="left:995px;top:716px;width:63px">0.999</div>
<div class="c r" style="left:35px;top:733px;width:63px">9099</div>
<div class="c" style="left:99px;top:733px;width:63px">valine biosynthesis</div>
<div class="c" style="left:163px;top:733px;width:63px">P</div>
<div class="c r" style="left:227px;top:733px;width:63px">2</div>
<div class="c r" style="left:291px;top:733px;width:63px">2</div>
<div class="c r" style="left:355px;top:733px;width:63px">2</div>
<div class="c r" style="left:419px;top:733px;width:63px">100</div>
<div class="c r" style="left:483px;top:733px;width:63px">100</div>
<div class="c r" style="left:547px;top:733px;width:63px">2</div>
<div class="c r" style="left:611px;top:733px;width:63px">2</div>
<div class="c r" style="left:675px;top:733px;width:63px">2</div>
<div class="c r" style="left:739px;top:733px;width:63px">100</div>
<div class="c r" style="left:803px;top:733px;width:63px">100</div>
<div class="c r" style="left:867px;top:733px;width:63px">3.417</div>
<div class="c r" style="left:931px;top:733px;width:63px">0.031</div>
<div class="c r" style="left:995px;top:733px;width:63px">0.991</div>
<div class="c r" style="left:35px;top:750px;width:63px">6573</div>
<div class="c" style="left:99px;top:750px;width:63px">valine metabolism</div>
<div class="c" style="left:163px;top:750px;width:63px">P</div>
<div class="c r" style="left:227px;top:750px;width:63px">0</div>
<div class="c r" style="left:291px;top:750px;width:63px">0</div>
<div class="c r" style="left:355px;top:750px;width:63px">0</div>
<div class="c r" style="left:419px;top:750px;width:63px">0</div>
<div class="c r" style="left:483px;top:750px;width:63px">0</div>
<div class="c r" style="left:547px;top:750px;width:63px">2</div>
<div class="c r" style="left:611px;top:750px;width:63px">2</div>
<div class="c r" style="left:675px;top:750px;width:63px">2</div>
<div class="c r" style="left:739px;top:750px;width:63px">100</div>
<div class="c r" style="left:803px;top:750px;width:63px">100</div>
<div class="c r" style="left:867px;top:750px;width:63px">3.417</div>
<div class="c r" style="left:931px;top:750px;width:63px">0.031</div>
<div class="c r" style="left:995px;top:750px;width:63px">0.991</div>
<div class="c r" style="left:35px;top:767px;width:63px">16701</div>
<div class="c" style="left:99px;top:767px;width:63px">oxidoreductase</div>
<div class="c" style="left:163px;top:767px;width:63px">F</div>
<div class="c r" style="left:227px;top:767px;width:63px">0</div>
<div class="c r" style="left:291px;top:767px;width:63px">0</div>
<div class="c r" style="left:355px;top:767px;width:63px">0</div>
<div class="c r" style="left:419px;top:767px;width:63px">0</div>
<div class="c r" style="left:483px;top:767px;width:63px">0</div>
<div class="c r" style="left:547px;top:767px;width:63px">3</div>
<div class="c r" style="left:611px;top:767px;width:63px">6</div>
<div class="c r" style="left:675px;top:767px;width:63px">6</div>
<div class="c r" style="left:739px;top:767px;width:63px">50</div>
<div class="c r" style="left:803px;top:767px;width:63px">100</div>
<div class="c r" style="left:867px;top:767px;width:63px">2.455</div>
<div class="c r" style="left:931px;top:767px;width:63px">0.037</div>
<div class="c r" style="left:995px;top:767px;width:63px">1</div>
<div class="c r" style="left:35px;top:784px;width:63px">51213</div>
<div class="c" style="left:99px;top:784px;width:63px">dioxygenase</div>
<div class="c" style="left:163px;top:784px;width:63px">F</div>
<div class="c r" style="left:227px;top:784px;width:63px">0</div>
<div class="c r" style="left:291px;top:784px;width:63px">0</div>
<div class="c r" style="left:355px;top:784px;width:63px">0</div>
<div class="c r" style="left:419px;top:784px;width:63px">0</div>
<div class="c r" style="left:483px;top:784px;width:63px">0</div>
<div class="c r" style="left:547px;top:784px;width:63px">3</div>
<div class="c r" style="left:611px;top:784px;width:63px">6</div>
<div class="c r" style="left:675px;top:784px;width:63px">6</div>
<div class="c r" style="left:739px;top:784px;width:63px">50</div>
<div class="c r" style="left:803px;top:784px;width:63px">100</div>
<div class="c r" style="left:867px;top:784px;width:63px">2.455</div>
<div class="c r" style="left:931px;top:784px;width:63px">0.037</div>
<div class="c r" style="left:995px;top:784px;width:63px">1</div>
<div class="c r" style="left:35px;top:801px;width:63px">16702</div>
<div class="c" style="left:99px;top:801px;width:63px">oxidoreductase</div>
<div class="c" style="left:163px;top:801px;width:63px">F</div>
<div class="c r" style="left:227px;top:801px;width:63px">3</div>
<div class="c r" style="left:291px;top:801px;width:63px">6</div>
<div class="c r" style="left:355px;top:801px;width:63px">6</div>
<div class="c r" style="left:419px;top:801px;width:63px">50</div>
<div class="c r" style="left:483px;top:801px;width:63px">100</div>
<div class="c r" style="left:547px;top:801px;width:63px">3</div>
<div class="c r" style="left:611px;top:801px;width:63px">6</div>
<div class="c r" style="left:675px;top:801px;width:63px">6</div>
<div class="c r" style="left:739px;top:801px;width:63px">50</div>
<div class="c r" style="left:803px;top:801px;width:63px">100</div>
<div class="c r" style="left:867px;top:801px;width:63px">2.455</div>
<div class="c r" style="left:931px;top:801px;width:63px">0.037</div>
<div class="c r" style="left:995px;top:801px;width:63px">1</div>
<div class="c r" style="left:35px;top:818px;width:63px">6536</div>
<div class="c" style="left:99px;top:818px;width:63px">glutamate metabolism</div>
<div class="c" style="left:163px;top:818px;width:63px">P</div>
<div class="c r" style="left:227px;top:818px;width:63px">0</div>
<div class="c r" style="left:291px;top:818px;width:63px">0</div>
<div class="c r" style="left:355px;top:818px;width:63px">0</div>
<div class="c r" style="left:419px;top:818px;width:63px">0</div>
<div class="c r" style="left:483px;top:818px;width:63px">0</div>
<div class="c r" style="left:547px;top:818px;width:63px">3</div>
<div class="c r" style="left:611px;top:818px;width:63px">6</div>
<div class="c r" style="left:675px;top:818px;width:63px">6</div>
<div class="c r" style="left:739px;top:818px;width:63px">50</div>
<div class="c r" style="left:803px;top:818px;width:63px">100</div>
<div class="c r" style="left:867px;top:818px;width:63px">2.455</div>
<div class="c r" style="left:931px;top:818px;width:63px">0.044</div>
<div class="c r" style="left:995px;top:818px;width:63px">1</div>
<div class="c r" style="left:35px;top:835px;width:63px">42773</div>
<div class="c" style="left:99px;top:835px;width:63px">ATP synthase</div>
<div class="c" style="left:163px;top:835px;width:63px">P</div>
<div class="c r" style="left:227px;top:835px;width:63px">4</div>
<div class="c r" style="left:291px;top:835px;width:63px">8</div>
<div class="c r" style="left:355px;top:835px;width:63px">8</div>
<div class="c r" style="left:419px;top:835px;width:63px">50</div>
<div class="c r" style="left:483px;top:835px;width:63px">100</div>
<div class="c r" style="left:547px;top:835px;width:63px">4</div>
<div class="c r" style="left:611px;top:835px;width:63px">10</div>
<div class="c r" style="left:675px;top:835px;width:63px">10</div>
<div class="c r" style="left:739px;top:835px;width:63px">40</div>
<div class="c r" style="left:803px;top:835px;width:63px">100</div>
<div class="c r" style="left:867px;top:835px;width:63px">2.276</div>
<div class="c r" style="left:931px;top:835px;width:63px">0.046</div>
<div class="c r" style="left:995px;top:835px;width:63px">1</div>
<div class="c r" style="left:35px;top:852px;width:63px">22904</div>
<div class="c" style="left:99px;top:852px;width:63px">respiratory chain</div>
<div class="c" style="left:163px;top:852px;width:63px">P</div>
<div class="c r" style="left:227px;top:852px;width:63px">0</div>
<div class="c r" style="left:291px;top:852px;width:63px">2</div>
<div class="c r" style="left:355px;top:852px;width:63px">2</div>
<div class="c r" style="left:419px;top:852px;width:63px">0</div>
<div class="c r" style="left:483px;top:852px;width:63px">100</div>
<div class="c r" style="left:547px;top:852px;width:63px">4</div>
<div class="c r" style="left:611px;top:852px;width:63px">10</div>
<div class="c r" style="left:675px;top:852px;width:63px">10</div>
<div class="c r" style="left:739px;top:852px;width:63px">40</div>
<div class="c r" style="left:803px;top:852px;width:63px">100</div>
<div class="c r" style="left:867px;top:852px;width:63px">2.276</div>
<div class="c r" style="left:931px;top:852px;width:63px">0.046</div>
<div class="c r" style="left:995px;top:852px;width:63px">1</div>
<div class="c r" style="left:35px;top:869px;width:63px">16684</div>
<div class="c" style="left:99px;top:869px;width:63px">oxidoreductase</div>
<div class="c" style="left:163px;top:869px;width:63px">F</div>
<div class="c r" style="left:227px;top:869px;width:63px">1</div>
<div class="c r" style="left:291px;top:869px;width:63px">2</div>
<div class="c r" style="left:355px;top:869px;width:63px">2</div>
<div class="c r" style="left:419px;top:869px;width:63px">50</div>
<div class="c r" style="left:483px;top:869px;width:63px">100</div>
<div class="c r" style="left:547px;top:869px;width:63px">3</div>
<div class="c r" style="left:611px;top:869px;width:63px">6</div>
<div class="c r" style="left:675px;top:869px;width:63px">6</div>
<div class="c r" style="left:739px;top:869px;width:63px">50</div>
<div class="c r" style="left:803px;top:869px;width:63px">100</div>
<div class="c r" style="left:867px;top:869px;width:63px">2.455</div>
<div class="c r" style="left:931px;top:869px;width:63px">0.047</div>
<div class="c r" style="left:995px;top:869px;width:63px">1</div>
<div class="a" style="left:1262px;top:120px;width:18px;height:850px;background:#fcfcfe"></div>
<div class="a" style="left:1262px;top:126px;width:16px;height:2px;background:#000"></div>
<div class="a" style="left:1262px;top:120px;width:18px;height:1px;background:#6f6d62"></div>
<div class="a" style="left:1262px;top:121px;width:16px;height:5px;background:#ece9d8"></div>
<div class="a" style="left:1278px;top:26px;width:2px;height:94px;background:#c4dafa"></div>
<div class="a" style="left:1264px;top:128px;width:14px;height:15px;border-radius:2px;background:linear-gradient(135deg,#dae6fd,#b9cdf7);border:1px solid #d0dcf6"></div>
<svg class="a" style="left:1264px;top:128px" width="14" height="15"><path d="M3 9L7 5L11 9" stroke="#4d6185" stroke-width="2" fill="none"/></svg>
<div class="a" style="left:1264px;top:937px;width:14px;height:15px;border-radius:2px;background:linear-gradient(135deg,#dae6fd,#b9cdf7);border:1px solid #d0dcf6"></div>
<svg class="a" style="left:1264px;top:937px" width="14" height="15"><path d="M3 6L7 10L11 6" stroke="#4d6185" stroke-width="2" fill="none"/></svg>
<div class="a" style="left:1264px;top:146px;width:14px;height:789px;border-radius:2px;background:linear-gradient(90deg,#cad9fb,#b9cdf7);border:1px solid #c8d6f4"></div>
<div class="a" style="left:1267px;top:537px;width:8px;height:1px;background:#8fa6d8;box-shadow:0 1px 0 #eef3ff"></div>
<div class="a" style="left:1267px;top:539px;width:8px;height:1px;background:#8fa6d8;box-shadow:0 1px 0 #eef3ff"></div>
<div class="a" style="left:1267px;top:541px;width:8px;height:1px;background:#8fa6d8;box-shadow:0 1px 0 #eef3ff"></div>
<div class="a" style="left:1267px;top:543px;width:8px;height:1px;background:#8fa6d8;box-shadow:0 1px 0 #eef3ff"></div>
<div class="a" style="left:1262px;top:953px;width:16px;height:17px;background:#ece9d8"></div>
<div class="a" style="left:1px;top:954px;width:762px;height:16px;background:#ece9d8"></div>
<svg class="a" style="left:4px;top:956px" width="11" height="12"><path d="M2 2V10" stroke="#000" stroke-width="1.5"/><path d="M8 2V10L4 6Z" fill="#000"/></svg>
<svg class="a" style="left:21px;top:956px" width="11" height="12"><path d="M7 2V10L3 6Z" fill="#000"/></svg>
<svg class="a" style="left:36px;top:956px" width="11" height="12"><path d="M3 2V10L7 6Z" fill="#000"/></svg>
<svg class="a" style="left:52px;top:956px" width="11" height="12"><path d="M3 2V10L7 6Z" fill="#000"/><path d="M9 2V10" stroke="#000" stroke-width="1.5"/></svg>
<div class="a" style="left:64px;top:954px;width:1px;height:16px;background:#c9c5b3"></div>
<svg class="a" style="left:64px;top:953px" width="220" height="17"><path d="M2 1L9 15H207L214 1" fill="#fff" stroke="#000" stroke-width="1"/></svg>
<div class="a" style="left:76px;top:954px;font-size:12px;letter-spacing:0.38px;font-weight:bold;line-height:15px;white-space:nowrap">saureusrnwmapp-Criterion3-GO</div>
<div class="a" style="left:763px;top:954px;width:2px;height:15px;background:#000"></div>
<div class="a" style="left:765px;top:954px;width:497px;height:16px;background:#fcfcfe"></div>
<div class="a" style="left:765px;top:954px;width:14px;height:15px;border-radius:2px;background:linear-gradient(135deg,#dae6fd,#b9cdf7);border:1px solid #d0dcf6"></div>
<svg class="a" style="left:765px;top:954px" width="14" height="15"><path d="M9 3L5 7.5L9 12" stroke="#4d6185" stroke-width="2" fill="none"/></svg>
<div class="a" style="left:782px;top:955px;width:410px;height:13px;border-radius:2px;background:linear-gradient(#cad9fb,#b9cdf7);border:1px solid #c8d6f4"></div>
<div class="a" style="left:984px;top:958px;width:1px;height:7px;background:#8fa6d8"></div>
<div class="a" style="left:986px;top:958px;width:1px;height:7px;background:#8fa6d8"></div>
<div class="a" style="left:988px;top:958px;width:1px;height:7px;background:#8fa6d8"></div>
<div class="a" style="left:990px;top:958px;width:1px;height:7px;background:#8fa6d8"></div>
<div class="a" style="left:1241px;top:954px;width:14px;height:15px;border-radius:2px;background:linear-gradient(135deg,#dae6fd,#b9cdf7);border:1px solid #d0dcf6"></div>
<svg class="a" style="left:1241px;top:954px" width="14" height="15"><path d="M5 3L9 7.5L5 12" stroke="#4d6185" stroke-width="2" fill="none"/></svg>
<div class="a" style="left:1261px;top:953px;width:2px;height:17px;background:#000"></div>
<div class="a" style="left:0;top:970px;width:1280px;height:20px;background:#ece9d8;border-top:1px solid #fff"></div>
<div class="a" style="left:4px;top:974px;font-size:11px;line-height:14px">Filter Mode</div>
<div class="sp" style="left:969px;width:33px"></div>
<div class="sp" style="left:1003px;width:112px"></div>
<div class="sp" style="left:1116px;width:25px"></div>
<div class="sp" style="left:1142px;width:31px"></div>
<div class="sp" style="left:1174px;width:25px"></div>
<div class="sp" style="left:1200px;width:29px"></div>
<div class="sp" style="left:1230px;width:25px"></div>
<div class="sp" style="left:1256px;width:22px"></div>
<div class="a" style="left:1176px;top:975px;font-size:11px;line-height:14px">NUM</div>
<div class="a" style="left:0;top:989px;width:1280px;height:1px;background:#fff"></div>
<div class="a" style="left:0;top:990px;width:1280px;height:34px;background:linear-gradient(#3168d5 0%,#4993e6 8%,#2a6fe3 15%,#245edb 50%,#2157d7 90%,#1941a5 100%)"></div>
<div class="a" style="left:0;top:994px;width:95px;height:30px;border-radius:0 8px 8px 0;background:linear-gradient(#8fd486 0%,#5cb653 10%,#45a842 30%,#3fa03d 60%,#3c9a3a 85%,#2e7f2d 100%);box-shadow:inset -3px 0 3px #2f7a2c, inset 0 1px 0 #a8e0a0"></div>
<div class="a" style="left:9px;top:998px;width:22px;height:22px"><svg width="22" height="22" viewBox="0 0 22 22" style="display:block"><path d="M1 3Q5 1 10 3V10Q5 8 1 10Z" fill="#f05a22"/><path d="M11 3Q16 5 21 3V10Q16 12 11 10Z" fill="#7ac142"/><path d="M1 11Q5 9 10 11V19Q5 17 1 19Z" fill="#00a4ef"/><path d="M11 11Q16 13 21 11V19Q16 21 11 19Z" fill="#ffb900"/></svg></div>
<div class="a" style="left:34px;top:998px;font-size:18px;font-weight:bold;font-style:italic;color:#fff;line-height:22px;text-shadow:1px 1px 1px #1a4a18;letter-spacing:-0.3px">start</div>
<div class="a" style="left:108px;top:1000px;width:2px;height:2px;background:#1c3e9e"></div>
<div class="a" style="left:194px;top:1000px;width:2px;height:2px;background:#1c3e9e"></div>
<div class="a" style="left:109px;top:1003px;width:2px;height:2px;background:#1c3e9e"></div>
<div class="a" style="left:195px;top:1003px;width:2px;height:2px;background:#1c3e9e"></div>
<div class="a" style="left:108px;top:1006px;width:2px;height:2px;background:#1c3e9e"></div>
<div class="a" style="left:194px;top:1006px;width:2px;height:2px;background:#1c3e9e"></div>
<div class="a" style="left:109px;top:1009px;width:2px;height:2px;background:#1c3e9e"></div>
<div class="a" style="left:195px;top:1009px;width:2px;height:2px;background:#1c3e9e"></div>
<div class="a" style="left:108px;top:1012px;width:2px;height:2px;background:#1c3e9e"></div>
<div class="a" style="left:194px;top:1012px;width:2px;height:2px;background:#1c3e9e"></div>
<div class="a" style="left:109px;top:1015px;width:2px;height:2px;background:#1c3e9e"></div>
<div class="a" style="left:195px;top:1015px;width:2px;height:2px;background:#1c3e9e"></div>
<div class="a" style="left:108px;top:1018px;width:2px;height:2px;background:#1c3e9e"></div>
<div class="a" style="left:194px;top:1018px;width:2px;height:2px;background:#1c3e9e"></div>
<div class="a" style="left:118px;top:1001px;width:16px;height:16px"><svg width="16" height="16" viewBox="0 0 16 16" style="display:block"><rect x="1.5" y="2.5" width="12" height="12" rx="3" fill="#f4f8ff" stroke="#2a5ab0" stroke-width="1.5"/><path d="M5 11L12 3" stroke="#3a6ad0" stroke-width="2" fill="none"/><path d="M4 6H9M4 9H7" stroke="#6a8ad0"/></svg></div>
<div class="a" style="left:142px;top:1001px;width:16px;height:16px"><svg width="16" height="16" viewBox="0 0 16 16" style="display:block"><path d="M13 10A5.5 5.5 0 1 1 13 6H4.5" fill="none" stroke="#4aa8f0" stroke-width="3"/><path d="M1 12Q4 2 15 2" fill="none" stroke="#2a78c8" stroke-width="1.2"/></svg></div>
<div class="a" style="left:165px;top:1001px;width:16px;height:16px"><svg width="16" height="16" viewBox="0 0 16 16" style="display:block"><circle cx="8" cy="8" r="7" fill="#f8f8f8" stroke="#c8a070" stroke-width="1.5"/><path d="M3 3A7 7 0 0 1 13 3" stroke="#e05a30" stroke-width="1.5" fill="none"/><path d="M3 13A7 7 0 0 0 13 13" stroke="#40a040" stroke-width="1.5" fill="none"/><path d="M6 4.5V11.5L11.5 8Z" fill="#2a4aa8"/></svg></div>
<div class="tbtn" style="left:202px;width:158px"></div>
<div class="a" style="left:212px;top:1001px;width:16px;height:16px"><svg width="16" height="16" viewBox="0 0 16 16" style="display:block"><rect x="3.5" y="1.5" width="11" height="13" fill="#f8f8f8" stroke="#5a6a88"/><text x="0" y="13" font-family="Liberation Serif" font-size="14" font-style="italic" font-weight="bold" fill="#2a78d0">e</text></svg></div>
<div class="a" style="left:231px;top:1002px;font-size:11px;letter-spacing:-0.15px;line-height:14px;color:#fff;white-space:nowrap">User:Ryan N. Willhite...</div>
<div class="tbtn" style="left:362px;width:158px"></div>
<div class="a" style="left:372px;top:1001px;width:16px;height:16px"><svg width="16" height="16" viewBox="0 0 16 16" style="display:block"><rect x="0" y="0" width="16" height="16" fill="#f0e030"/><circle cx="8" cy="8" r="4" fill="#2a5a88"/><path d="M1 1L15 15M15 1L1 15M8 0V16M0 8H16" stroke="#1a3a6a" stroke-width="1"/></svg></div>
<div class="a" style="left:391px;top:1002px;font-size:11px;letter-spacing:-0.15px;line-height:14px;color:#fff;white-space:nowrap">GenMAPP 2.1</div>
<div class="tbtn" style="left:522px;width:157px"></div>
<div class="a" style="left:532px;top:1001px;width:16px;height:16px"><svg width="16" height="16" viewBox="0 0 16 16" style="display:block"><rect x="0" y="0" width="16" height="16" fill="#222"/><path d="M8 1V15M1 8H15" stroke="#fff" stroke-width="2"/><path d="M8 0L5 3H11ZM8 16L5 13H11ZM0 8L3 5V11ZM16 8L13 5V11Z" fill="#fff"/></svg></div>
<div class="a" style="left:551px;top:1002px;font-size:11px;letter-spacing:-0.15px;line-height:14px;color:#fff;white-space:nowrap">MAPPFinder Browser</div>
<div class="tbtn" style="left:681px;width:159px;background:#1e4fc2;box-shadow:inset 1px 1px 1px #0f2f8f, inset -1px -1px 0 #3b6fe0"></div>
<div class="a" style="left:691px;top:1001px;width:16px;height:16px"><svg width="16" height="16" viewBox="0 0 16 16" style="display:block"><rect x="0.5" y="0.5" width="15" height="15" fill="#dfe8c8" stroke="#4a7a3a"/><rect x="2" y="2" width="12" height="12" fill="#6aa848"/><path d="M4 4L12 12M12 4L4 12" stroke="#fff" stroke-width="2.4"/></svg></div>
<div class="a" style="left:710px;top:1002px;font-size:11px;letter-spacing:-0.15px;line-height:14px;color:#fff;white-space:nowrap">Microsoft Excel - saur...</div>
<div class="a" style="left:1079px;top:990px;width:201px;height:34px;background:linear-gradient(#1aa3f0 0%,#1290e8 10%,#0f8ae4 50%,#0c7fd8 90%,#0b62b4 100%);box-shadow:inset 1px 0 0 #0a4fb0, inset 2px 0 0 #3db2f5"></div>
<div class="a" style="left:1089px;top:1000px;width:16px;height:16px"><svg width="16" height="16" viewBox="0 0 16 16" style="display:block"><circle cx="5" cy="4" r="3" fill="#d04040"/><rect x="1" y="8" width="6" height="6" fill="#40a040"/><rect x="9" y="8" width="6" height="6" fill="#4060d0"/><rect x="9" y="2" width="5" height="5" fill="#e0c040"/></svg></div>
<div class="a" style="left:1107px;top:1000px;width:16px;height:16px"><svg width="16" height="16" viewBox="0 0 16 16" style="display:block"><path d="M8 1L14 3V8Q14 13 8 15Q2 13 2 8V3Z" fill="#f0c818" stroke="#806010"/><path d="M8 4V9M8 11V12" stroke="#000" stroke-width="1.6"/></svg></div>
<div class="a" style="left:1126px;top:1000px;width:16px;height:16px"><svg width="16" height="16" viewBox="0 0 16 16" style="display:block"><circle cx="8" cy="8" r="6" fill="#606878" stroke="#303848"/><path d="M3 13L13 3" stroke="#c0c8d8" stroke-width="1.5"/></svg></div>
<div class="a" style="left:1144px;top:1000px;width:16px;height:16px"><svg width="16" height="16" viewBox="0 0 16 16" style="display:block"><circle cx="8" cy="8" r="6.5" fill="#f0f0f0" stroke="#b89a30"/><circle cx="6" cy="7" r="1" fill="#000"/><circle cx="10" cy="7" r="1" fill="#000"/><path d="M5 10Q8 13 11 10" stroke="#000" fill="none"/></svg></div>
<div class="a" style="left:1162px;top:1000px;width:16px;height:16px"><svg width="16" height="16" viewBox="0 0 16 16" style="display:block"><rect x="1" y="3" width="11" height="9" fill="#f0d060" stroke="#8a6a10"/><rect x="6" y="7" width="9" height="7" fill="#80b0e0" stroke="#3a5a8a"/></svg></div>
<div class="a" style="left:1180px;top:1000px;width:16px;height:16px"><svg width="16" height="16" viewBox="0 0 16 16" style="display:block"><rect x="1.5" y="1.5" width="13" height="10" fill="#c8d0e0" stroke="#404858"/><path d="M4 14H12M8 11V14" stroke="#404858" stroke-width="1.5"/></svg></div>
<div class="a" style="left:1199px;top:1000px;width:16px;height:16px"><svg width="16" height="16" viewBox="0 0 16 16" style="display:block"><path d="M2 12L10 2L15 7L7 15Z" fill="#e8d040" stroke="#6a5a10"/><path d="M5 9L10 14" stroke="#6a5a10"/></svg></div>
<div class="a" style="left:1220px;top:1002px;font-size:11px;line-height:14px;color:#fff">11:10 AM</div>
</div></body></html>
